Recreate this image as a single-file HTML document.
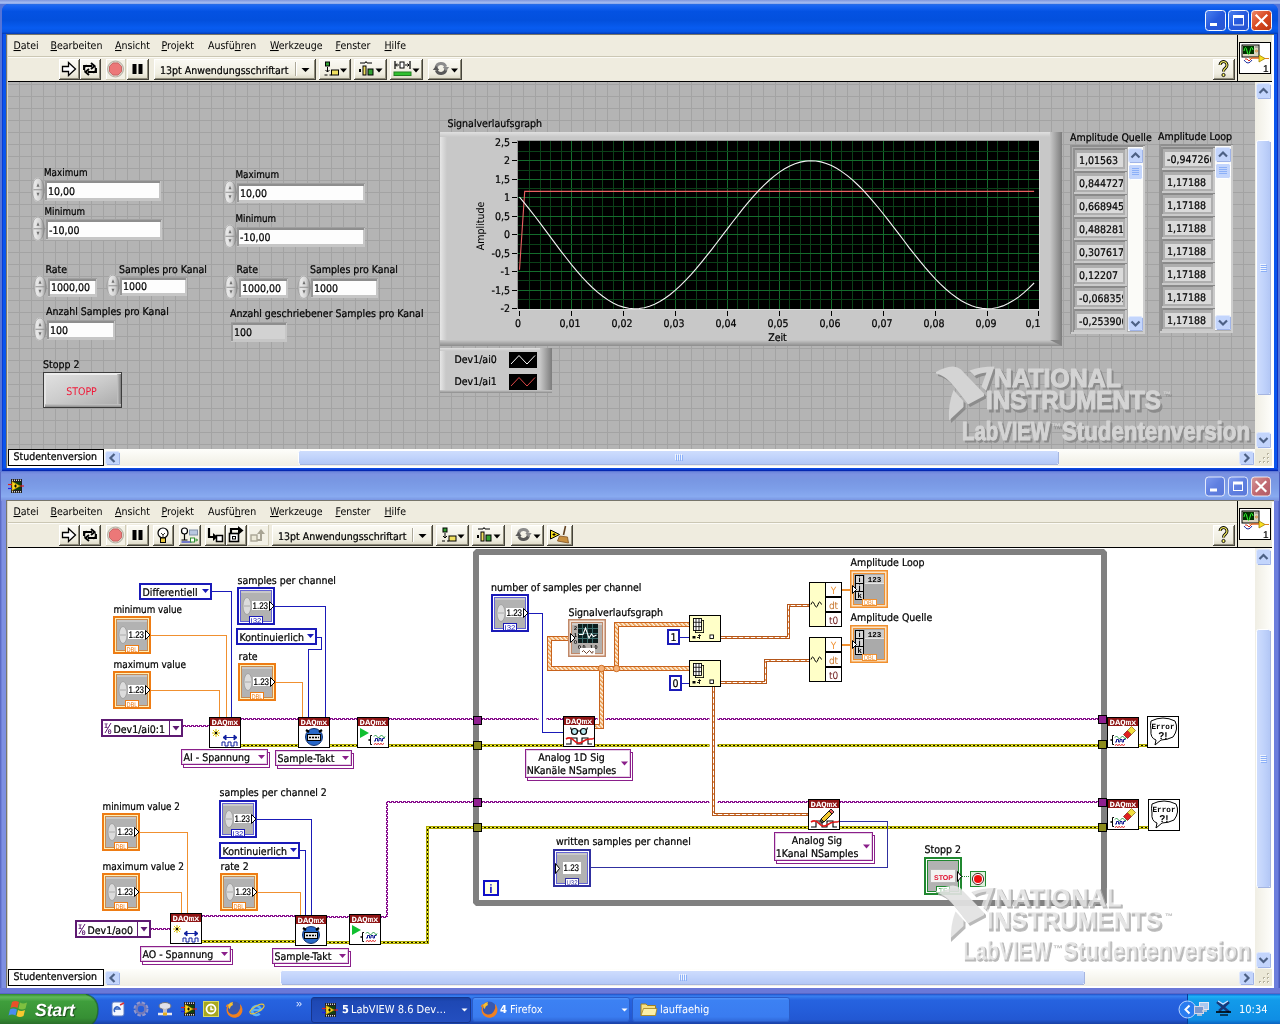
<!DOCTYPE html>
<html lang="de"><head><meta charset="utf-8"><title>LabVIEW 8.6 Development System</title>
<style>
html,body{margin:0;padding:0;width:1280px;height:1024px;overflow:hidden;background:#245edb}
#desktop{position:relative;width:1280px;height:1024px;overflow:hidden}
svg{display:block;will-change:transform}
svg text{white-space:pre}
svg text.k{stroke:#000;stroke-width:0.22px}
</style></head>
<body><div id="desktop">
<section id="frontpanel-window">
<svg style="position:absolute;left:0;top:0px" width="1280" height="471" viewBox="0 0 1280 471" font-family="'DejaVu Sans Condensed','Liberation Sans',sans-serif" font-size="10.5" text-rendering="geometricPrecision"><defs>
<linearGradient id="topband" x1="0" y1="0" x2="0" y2="1"><stop offset="0" stop-color="#7f96de"/><stop offset="0.6" stop-color="#a3baf0"/><stop offset="1" stop-color="#8aa6ea"/></linearGradient>
<linearGradient id="tA" x1="0" y1="0" x2="0" y2="1">
 <stop offset="0" stop-color="#2a6ee6"/><stop offset="0.08" stop-color="#1763f2"/><stop offset="0.25" stop-color="#0452e2"/>
 <stop offset="0.55" stop-color="#0350dd"/><stop offset="0.8" stop-color="#085cf0"/><stop offset="0.93" stop-color="#0654e4"/><stop offset="1" stop-color="#0338b0"/>
</linearGradient>
<linearGradient id="tI" x1="0" y1="0" x2="0" y2="1">
 <stop offset="0" stop-color="#6a82da"/><stop offset="0.12" stop-color="#7b92e2"/><stop offset="0.3" stop-color="#7896e2"/>
 <stop offset="0.6" stop-color="#7d9ee8"/><stop offset="0.88" stop-color="#88aaf0"/><stop offset="1" stop-color="#7a96e2"/>
</linearGradient>
<linearGradient id="btnB" x1="0" y1="0" x2="1" y2="1">
 <stop offset="0" stop-color="#4d82f0"/><stop offset="0.5" stop-color="#2659dd"/><stop offset="1" stop-color="#2a55d0"/>
</linearGradient>
<linearGradient id="btnR" x1="0" y1="0" x2="1" y2="1">
 <stop offset="0" stop-color="#ee8a6c"/><stop offset="0.5" stop-color="#d8481f"/><stop offset="1" stop-color="#b83412"/>
</linearGradient>
<linearGradient id="btnBi" x1="0" y1="0" x2="1" y2="1">
 <stop offset="0" stop-color="#7f9bf0"/><stop offset="0.5" stop-color="#5f7fe0"/><stop offset="1" stop-color="#5a78d8"/>
</linearGradient>
<linearGradient id="btnRi" x1="0" y1="0" x2="1" y2="1">
 <stop offset="0" stop-color="#d59a9a"/><stop offset="0.5" stop-color="#c26a72"/><stop offset="1" stop-color="#b05a66"/>
</linearGradient>
<linearGradient id="hTrack" x1="0" y1="0" x2="0" y2="1">
 <stop offset="0" stop-color="#fefefb"/><stop offset="1" stop-color="#f0eee4"/>
</linearGradient>
<linearGradient id="vTrack" x1="0" y1="0" x2="1" y2="0">
 <stop offset="0" stop-color="#f0eee4"/><stop offset="1" stop-color="#fefefb"/>
</linearGradient>
<linearGradient id="hThumb" x1="0" y1="0" x2="0" y2="1">
 <stop offset="0" stop-color="#cfddfd"/><stop offset="0.5" stop-color="#c1d3fb"/><stop offset="1" stop-color="#b2c6f5"/>
</linearGradient>
<linearGradient id="vThumb" x1="0" y1="0" x2="1" y2="0">
 <stop offset="0" stop-color="#cfddfd"/><stop offset="0.5" stop-color="#c1d3fb"/><stop offset="1" stop-color="#b2c6f5"/>
</linearGradient>
<linearGradient id="tbBtn" x1="0" y1="0" x2="0" y2="1">
 <stop offset="0" stop-color="#fbfaf4"/><stop offset="0.7" stop-color="#efede0"/><stop offset="1" stop-color="#d8d4c0"/>
</linearGradient>
<linearGradient id="taskbar" x1="0" y1="0" x2="0" y2="1">
 <stop offset="0" stop-color="#1f50c8"/><stop offset="0.07" stop-color="#3a80f0"/><stop offset="0.2" stop-color="#2663e0"/>
 <stop offset="0.5" stop-color="#245edb"/><stop offset="0.85" stop-color="#2258d3"/><stop offset="1" stop-color="#1941a5"/>
</linearGradient>
<linearGradient id="tray" x1="0" y1="0" x2="0" y2="1">
 <stop offset="0" stop-color="#0f6ad8"/><stop offset="0.08" stop-color="#1fb0f5"/><stop offset="0.2" stop-color="#129bea"/>
 <stop offset="0.85" stop-color="#0f8ee4"/><stop offset="1" stop-color="#0a62c0"/>
</linearGradient>
<linearGradient id="startg" x1="0" y1="0" x2="0" y2="1">
 <stop offset="0" stop-color="#2f8a2f"/><stop offset="0.1" stop-color="#5fb85a"/><stop offset="0.25" stop-color="#3f9e3c"/>
 <stop offset="0.8" stop-color="#368f34"/><stop offset="1" stop-color="#2a6e2a"/>
</linearGradient>
<linearGradient id="taskAct" x1="0" y1="0" x2="0" y2="1">
 <stop offset="0" stop-color="#183e9e"/><stop offset="0.15" stop-color="#1e48b4"/><stop offset="1" stop-color="#244fc0"/>
</linearGradient>
<linearGradient id="taskBtn" x1="0" y1="0" x2="0" y2="1">
 <stop offset="0" stop-color="#5a97f8"/><stop offset="0.12" stop-color="#3c81f3"/><stop offset="0.8" stop-color="#3a7cf0"/><stop offset="1" stop-color="#2f68d8"/>
</linearGradient>

<filter id="wmblur" x="-5%" y="-20%" width="110%" height="140%"><feGaussianBlur stdDeviation="0.7"/></filter>
<pattern id="grid" x="7" y="0" width="12" height="12" patternUnits="userSpaceOnUse">
 <rect width="12" height="12" fill="#b4b4b4"/><rect width="1" height="12" fill="#a3a3a3"/><rect width="12" height="1" fill="#a3a3a3"/>
</pattern>
<linearGradient id="spin" x1="0" y1="0" x2="1" y2="0">
 <stop offset="0" stop-color="#b0b0b0"/><stop offset="0.25" stop-color="#eaeaea"/><stop offset="0.65" stop-color="#d4d4d4"/><stop offset="1" stop-color="#868686"/>
</linearGradient>
<linearGradient id="stopF" x1="0" y1="0" x2="1" y2="1">
 <stop offset="0" stop-color="#e2e2e2"/><stop offset="0.5" stop-color="#cbcbcb"/><stop offset="1" stop-color="#a8a8a8"/>
</linearGradient>
<linearGradient id="bevR" x1="0" y1="0" x2="1" y2="0">
 <stop offset="0" stop-color="#c8c8c8"/><stop offset="1" stop-color="#7c7c7c"/>
</linearGradient>
<linearGradient id="bevL" x1="0" y1="0" x2="1" y2="0">
 <stop offset="0" stop-color="#e6e6e6"/><stop offset="1" stop-color="#c8c8c8"/>
</linearGradient>
<linearGradient id="bevT" x1="0" y1="0" x2="0" y2="1">
 <stop offset="0" stop-color="#e0e0e0"/><stop offset="1" stop-color="#c8c8c8"/>
</linearGradient>
<linearGradient id="bevB" x1="0" y1="0" x2="0" y2="1">
 <stop offset="0" stop-color="#c8c8c8"/><stop offset="1" stop-color="#8c8c8c"/>
</linearGradient>
</defs>
<rect x="0" y="0" width="1280" height="12" fill="#8aa6ea" />
<rect x="0" y="0" width="1280" height="4" fill="url(#topband)" />
<rect x="0" y="4" width="1280" height="467" fill="#5474d8" />
<path d="M2 471V11a7 7 0 0 1 7-7H1271a7 7 0 0 1 7 7V471z" fill="#0a50e6"/>
<clipPath id="w1clip"><path d="M2 471V11a7 7 0 0 1 7-7H1271a7 7 0 0 1 7 7V471z"/></clipPath>
<g clip-path="url(#w1clip)"><rect x="0" y="4" width="1280" height="30" fill="url(#tA)" /></g>
<rect x="2" y="34" width="1" height="437" fill="#0a3cd4" />
<rect x="3" y="34" width="3" height="434" fill="#0a55ec" />
<rect x="1277" y="34" width="1" height="437" fill="#0a30c0" />
<rect x="1274" y="34" width="3" height="434" fill="#0a55ec" />
<rect x="2" y="468" width="1276" height="1" fill="#0a48e0" />
<rect x="2" y="469" width="1276" height="1" fill="#0a3cd2" />
<rect x="2" y="470" width="1276" height="1" fill="#0628b0" />
<rect x="6" y="34" width="1268" height="434" fill="#ece9d8" />
<rect x="6" y="34" width="1" height="434" fill="#77756a" />
<rect x="6" y="34" width="1268" height="1" fill="#77756a" />
<rect x="7" y="35" width="1" height="431" fill="#d8d4c8" />
<rect x="7" y="466" width="1266" height="2" fill="#fff" />
<rect x="1272" y="35" width="2" height="433" fill="#fff" />
<rect x="1205.5" y="10.5" width="20" height="20" rx="3" fill="url(#btnB)" stroke="#fff" stroke-width="1" stroke-opacity="0.95"/>
<rect x="1228.5" y="10.5" width="20" height="20" rx="3" fill="url(#btnB)" stroke="#fff" stroke-width="1" stroke-opacity="0.95"/>
<rect x="1251.5" y="10.5" width="20" height="20" rx="3" fill="url(#btnR)" stroke="#fff" stroke-width="1" stroke-opacity="0.95"/>
<rect x="1210" y="23" width="7" height="3" fill="#fff" />
<rect x="1233.5" y="16" width="10" height="9" fill="none" stroke="#fff" stroke-width="1"/>
<rect x="1233" y="15" width="11" height="3" fill="#fff" />
<path d="M1256.5 15.5L1266.5 25.5M1266.5 15.5L1256.5 25.5" stroke="#fff" stroke-width="2.2" stroke-linecap="square"/>
<rect x="8" y="35" width="1264" height="21" fill="#efecdf" />
<text x="13.5" y="49" font-size="10.5" fill="#000"><tspan text-decoration="underline">D</tspan>atei</text>
<text x="50.5" y="49" font-size="10.5" fill="#000"><tspan text-decoration="underline">B</tspan>earbeiten</text>
<text x="115" y="49" font-size="10.5" fill="#000"><tspan text-decoration="underline">A</tspan>nsicht</text>
<text x="161.5" y="49" font-size="10.5" fill="#000"><tspan text-decoration="underline">P</tspan>rojekt</text>
<text x="208" y="49" font-size="10.5" fill="#000">Ausfü<tspan text-decoration="underline">h</tspan>ren</text>
<text x="270" y="49" font-size="10.5" fill="#000"><tspan text-decoration="underline">W</tspan>erkzeuge</text>
<text x="335.5" y="49" font-size="10.5" fill="#000"><tspan text-decoration="underline">F</tspan>enster</text>
<text x="384.5" y="49" font-size="10.5" fill="#000"><tspan text-decoration="underline">H</tspan>ilfe</text>
<rect x="8" y="56" width="1264" height="1" fill="#cbc7b4" />
<rect x="8" y="57" width="1264" height="1" fill="#fbfaf5" />
<rect x="8" y="58" width="1264" height="23" fill="#efecdf" />
<rect x="59" y="59" width="21" height="21" fill="url(#tbBtn)" />
<rect x="59" y="59" width="21" height="1" fill="#fff" />
<rect x="59" y="59" width="1" height="21" fill="#fff" />
<rect x="60" y="78" width="20" height="1" fill="#8e8b7a" />
<rect x="78" y="60" width="1" height="20" fill="#8e8b7a" />
<rect x="59" y="79" width="21" height="1" fill="#45433a" />
<rect x="79" y="59" width="1" height="21" fill="#45433a" />
<path d="M62.5 66.5h6v-4l7 6.5l-7 6.5v-4h-6z" fill="#fff" stroke="#000" stroke-width="1.3" stroke-linejoin="miter"/>
<rect x="80" y="59" width="21" height="21" fill="url(#tbBtn)" />
<rect x="80" y="59" width="21" height="1" fill="#fff" />
<rect x="80" y="59" width="1" height="21" fill="#fff" />
<rect x="81" y="78" width="20" height="1" fill="#8e8b7a" />
<rect x="99" y="60" width="1" height="20" fill="#8e8b7a" />
<rect x="80" y="79" width="21" height="1" fill="#45433a" />
<rect x="100" y="59" width="1" height="21" fill="#45433a" />
<g fill="none" stroke="#000" stroke-width="1.9"><path d="M84.0 70.0v-4h8"/><path d="M96.0 68.0v4h-8"/><path d="M91.0 63.0l3.5 3l-3.5 3" /><path d="M89.0 75.0l-3.5-3l3.5-3"/><path d="M86.5 73.0a5 5 0 0 1 0-8M93.5 65.0a5 5 0 0 1 0 8" stroke-width="1.2"/></g>
<rect x="106" y="59" width="20" height="21" fill="#f3f1e6" />
<rect x="106" y="59" width="20" height="1" fill="#fff" />
<rect x="106" y="59" width="1" height="21" fill="#fff" />
<rect x="106" y="79" width="20" height="1" fill="#d0ccb8" />
<rect x="125" y="59" width="1" height="21" fill="#d0ccb8" />
<circle cx="115.5" cy="69.0" r="8" fill="#dcd8cc" stroke="#b4b0a4" stroke-width="1"/><polygon points="112.9,63.0 118.1,63.0 121.5,66.4 121.5,71.6 118.1,75.0 112.9,75.0 109.5,71.6 109.5,66.4" fill="#ec7878" stroke="#c86464" stroke-width="1"/>
<rect x="127" y="59" width="22" height="21" fill="url(#tbBtn)" />
<rect x="127" y="59" width="22" height="1" fill="#fff" />
<rect x="127" y="59" width="1" height="21" fill="#fff" />
<rect x="128" y="78" width="21" height="1" fill="#8e8b7a" />
<rect x="147" y="60" width="1" height="20" fill="#8e8b7a" />
<rect x="127" y="79" width="22" height="1" fill="#45433a" />
<rect x="148" y="59" width="1" height="21" fill="#45433a" />
<rect x="132.5" y="64.0" width="4" height="10" fill="#000" /><rect x="138.5" y="64.0" width="4" height="10" fill="#000" />
<rect x="154" y="59" width="162" height="21" fill="url(#tbBtn)" />
<rect x="154" y="59" width="162" height="1" fill="#fff" />
<rect x="154" y="59" width="1" height="21" fill="#fff" />
<rect x="155" y="78" width="161" height="1" fill="#8e8b7a" />
<rect x="314" y="60" width="1" height="20" fill="#8e8b7a" />
<rect x="154" y="79" width="162" height="1" fill="#45433a" />
<rect x="315" y="59" width="1" height="21" fill="#45433a" /><text x="160" y="73.5" font-size="10.5" fill="#000" class="k" >13pt Anwendungsschriftart</text><rect x="295" y="62" width="1" height="14" fill="#aca899" /><rect x="296" y="62" width="1" height="14" fill="#fff" /><path d="M301.5 68.0h8l-4.0 4z" fill="#000"/>
<rect x="319" y="59" width="32" height="21" fill="url(#tbBtn)" />
<rect x="319" y="59" width="32" height="1" fill="#fff" />
<rect x="319" y="59" width="1" height="21" fill="#fff" />
<rect x="320" y="78" width="31" height="1" fill="#8e8b7a" />
<rect x="349" y="60" width="1" height="20" fill="#8e8b7a" />
<rect x="319" y="79" width="32" height="1" fill="#45433a" />
<rect x="350" y="59" width="1" height="21" fill="#45433a" />
<rect x="325.5" y="62.0" width="4" height="4" fill="#30a030" stroke="#000" stroke-width="1" /><path d="M327.5 67.0v5M325.5 70.0l2 2l2-2M324.5 75.0h3M329.5 75.0h2" stroke="#000" stroke-width="1" fill="none"/><rect x="331.5" y="70.0" width="7" height="5" fill="#f0e060" stroke="#000" stroke-width="1" /><path d="M340.0 68.5h7l-3.5 4z" fill="#000"/>
<rect x="354" y="59" width="33" height="21" fill="url(#tbBtn)" />
<rect x="354" y="59" width="33" height="1" fill="#fff" />
<rect x="354" y="59" width="1" height="21" fill="#fff" />
<rect x="355" y="78" width="32" height="1" fill="#8e8b7a" />
<rect x="385" y="60" width="1" height="20" fill="#8e8b7a" />
<rect x="354" y="79" width="33" height="1" fill="#45433a" />
<rect x="386" y="59" width="1" height="21" fill="#45433a" />
<path d="M360.0 63.0h5l1-1.5l1 1.5h5" stroke="#000" stroke-width="1" fill="none"/><rect x="359.0" y="69.0" width="2" height="3" fill="#000" /><rect x="363.0" y="66.0" width="3" height="9" fill="#f0e060" stroke="#000" stroke-width="1" /><rect x="368.0" y="69.0" width="5" height="6" fill="#30a030" stroke="#000" stroke-width="1" /><path d="M375.5 68.5h7l-3.5 4z" fill="#000"/>
<rect x="390" y="59" width="33" height="21" fill="url(#tbBtn)" />
<rect x="390" y="59" width="33" height="1" fill="#fff" />
<rect x="390" y="59" width="1" height="21" fill="#fff" />
<rect x="391" y="78" width="32" height="1" fill="#8e8b7a" />
<rect x="421" y="60" width="1" height="20" fill="#8e8b7a" />
<rect x="390" y="79" width="33" height="1" fill="#45433a" />
<rect x="422" y="59" width="1" height="21" fill="#45433a" />
<path d="M395.0 61.0v8M410.0 61.0v8" stroke="#000" stroke-width="1.2"/><rect x="400.0" y="62.0" width="4" height="6" fill="#fff" stroke="#000" stroke-width="1" /><path d="M396.0 65.0h3M405.0 65.0h4M397.0 63.5l-1.5 1.5l1.5 1.5M407.5 63.5l1.5 1.5l-1.5 1.5" stroke="#000" stroke-width="1" fill="none"/><rect x="394.0" y="72.0" width="17" height="3.5" fill="#30c030" stroke="#208020" stroke-width="1" /><path d="M412.5 68.5h7l-3.5 4z" fill="#000"/>
<rect x="428" y="59" width="34" height="21" fill="url(#tbBtn)" />
<rect x="428" y="59" width="34" height="1" fill="#fff" />
<rect x="428" y="59" width="1" height="21" fill="#fff" />
<rect x="429" y="78" width="33" height="1" fill="#8e8b7a" />
<rect x="460" y="60" width="1" height="20" fill="#8e8b7a" />
<rect x="428" y="79" width="34" height="1" fill="#45433a" />
<rect x="461" y="59" width="1" height="21" fill="#45433a" />
<path d="M436.08 67.63A5 5 0 0 1 445.7 66.79" fill="none" stroke="#8c8c8c" stroke-width="3"/><path d="M445.92 69.37A5 5 0 0 1 436.3 70.21" fill="none" stroke="#585858" stroke-width="3"/><path d="M442.8 67.0h6.4l-3.2 4.2z" fill="#8c8c8c"/><path d="M432.8 70.0h6.4l-3.2-4.2z" fill="#585858"/><path d="M451.0 68.5h7l-3.5 4z" fill="#000"/>
<rect x="1213" y="59" width="22" height="21" fill="url(#tbBtn)" />
<rect x="1213" y="59" width="22" height="1" fill="#fff" />
<rect x="1213" y="59" width="1" height="21" fill="#fff" />
<rect x="1214" y="78" width="21" height="1" fill="#8e8b7a" />
<rect x="1233" y="60" width="1" height="20" fill="#8e8b7a" />
<rect x="1213" y="79" width="22" height="1" fill="#45433a" />
<rect x="1234" y="59" width="1" height="21" fill="#45433a" />
<path d="M1220.0 65.0a3.5 3.5 0 1 1 5.5 3q-2 1.5-2 3.5" fill="none" stroke="#000" stroke-width="3"/><path d="M1220.0 65.0a3.5 3.5 0 1 1 5.5 3q-2 1.5-2 3.5" fill="none" stroke="#f8f060" stroke-width="1.2"/><circle cx="1223.5" cy="75.0" r="1.6" fill="#f8f060" stroke="#000" stroke-width="0.9"/>
<rect x="8" y="81" width="1264" height="1" fill="#000" />
<rect x="1238" y="35" width="34" height="46" fill="#ece9d8" />
<rect x="1237" y="35" width="1" height="46" fill="#000" />
<rect x="1239.5" y="42.5" width="31" height="31" fill="#fff" stroke="#000" stroke-width="1" /><rect x="1242" y="45" width="17" height="12" fill="#d8d4c0" stroke="#000" stroke-width="1" /><rect x="1243" y="46" width="11" height="8" fill="#003000" /><path d="M1244 51q1.5-7 3 0t3 0t3-1" fill="none" stroke="#30ff30" stroke-width="1"/><circle cx="1256.5" cy="51" r="1" fill="none" stroke="#e08020" stroke-width="0.8"/><path d="M1255 47h3" stroke="#808080" stroke-width="1"/><path d="M1244 60q4 6 8 0" fill="none" stroke="#2030a0" stroke-width="1"/><path d="M1245 59h2l2 2l3-3h7" fill="none" stroke="#e03020" stroke-width="1"/><path d="M1249 58h10" stroke="#e08020" stroke-width="1"/><path d="M1259 55l6 3.5l-6 3.5z" fill="#f8e020" stroke="#a08000" stroke-width="0.8"/><path d="M1265 58.5h4" stroke="#e08020" stroke-width="1"/><text x="1263" y="72" font-size="10" fill="#000" class="k" font-family="'Liberation Sans',sans-serif" >1</text>
<rect x="1255" y="82" width="17" height="367" fill="url(#vTrack)" />
<rect x="1256.5" y="83.5" width="14" height="15" rx="2" fill="#c3d5fc" stroke="#dfe8fd" stroke-width="1"/><path d="M1270.5 85V98.5H1258" stroke="#a0b4e8" stroke-width="1" fill="none"/><path d="M1259.5 93.0l4-4l4 4" fill="none" stroke="#4d6185" stroke-width="2.2"/>
<rect x="1256.5" y="432.5" width="14" height="15" rx="2" fill="#c3d5fc" stroke="#dfe8fd" stroke-width="1"/><path d="M1270.5 434V447.5H1258" stroke="#a0b4e8" stroke-width="1" fill="none"/><path d="M1259.5 438.0l4 4l4-4" fill="none" stroke="#4d6185" stroke-width="2.2"/>
<rect x="1256.5" y="140.5" width="14" height="254" rx="2" fill="url(#vThumb)" stroke="#fff" stroke-width="1"/>
<path d="M1270.5 142V394.5H1258" stroke="#8ea2d8" stroke-width="1" fill="none" opacity="0.8"/>
<rect x="1260" y="264" width="6" height="1" fill="#eef4fe" />
<rect x="1261" y="265" width="6" height="1" fill="#8cb0f8" />
<rect x="1260" y="266" width="6" height="1" fill="#eef4fe" />
<rect x="1261" y="267" width="6" height="1" fill="#8cb0f8" />
<rect x="1260" y="268" width="6" height="1" fill="#eef4fe" />
<rect x="1261" y="269" width="6" height="1" fill="#8cb0f8" />
<rect x="1260" y="270" width="6" height="1" fill="#eef4fe" />
<rect x="1261" y="271" width="6" height="1" fill="#8cb0f8" />
<rect x="8" y="449" width="1247" height="17" fill="url(#hTrack)" />
<rect x="8.5" y="449.5" width="95" height="16" fill="#fff" stroke="#000" stroke-width="1" />
<text x="13.5" y="460" font-size="10.5" fill="#000" class="k" >Studentenversion</text>
<rect x="105.5" y="451.5" width="14" height="13" rx="2" fill="#c3d5fc" stroke="#dfe8fd" stroke-width="1"/><path d="M119.5 453V464.5H107" stroke="#a0b4e8" stroke-width="1" fill="none"/><path d="M114.5 454.0l-4 4l4 4" fill="none" stroke="#4d6185" stroke-width="2.2"/>
<rect x="1239.5" y="451.5" width="14" height="13" rx="2" fill="#c3d5fc" stroke="#dfe8fd" stroke-width="1"/><path d="M1253.5 453V464.5H1241" stroke="#a0b4e8" stroke-width="1" fill="none"/><path d="M1244.5 454.0l4 4l-4 4" fill="none" stroke="#4d6185" stroke-width="2.2"/>
<rect x="298.5" y="450.5" width="760" height="14" rx="2" fill="url(#hThumb)" stroke="#fff" stroke-width="1"/>
<path d="M1058.5 452v12M300 464.5h758" stroke="#8ea2d8" stroke-width="1" fill="none" opacity="0.8"/>
<rect x="675" y="454" width="1" height="6" fill="#eef4fe" />
<rect x="676" y="455" width="1" height="6" fill="#8cb0f8" />
<rect x="677" y="454" width="1" height="6" fill="#eef4fe" />
<rect x="678" y="455" width="1" height="6" fill="#8cb0f8" />
<rect x="679" y="454" width="1" height="6" fill="#eef4fe" />
<rect x="680" y="455" width="1" height="6" fill="#8cb0f8" />
<rect x="681" y="454" width="1" height="6" fill="#eef4fe" />
<rect x="682" y="455" width="1" height="6" fill="#8cb0f8" />
<rect x="1255" y="449" width="17" height="17" fill="#ece9d8" />
<rect x="1267" y="461" width="2" height="2" fill="#b8b4a0" />
<rect x="1268" y="462" width="1" height="1" fill="#fff" />
<rect x="1263" y="461" width="2" height="2" fill="#b8b4a0" />
<rect x="1264" y="462" width="1" height="1" fill="#fff" />
<rect x="1267" y="457" width="2" height="2" fill="#b8b4a0" />
<rect x="1268" y="458" width="1" height="1" fill="#fff" />
<rect x="1259" y="461" width="2" height="2" fill="#b8b4a0" />
<rect x="1260" y="462" width="1" height="1" fill="#fff" />
<rect x="1263" y="457" width="2" height="2" fill="#b8b4a0" />
<rect x="1264" y="458" width="1" height="1" fill="#fff" />
<rect x="1267" y="453" width="2" height="2" fill="#b8b4a0" />
<rect x="1268" y="454" width="1" height="1" fill="#fff" /><rect x="8" y="82" width="1247" height="367" fill="url(#grid)" />
<text x="44" y="176" font-size="10.5" fill="#000" class="k" textLength="43.5" lengthAdjust="spacingAndGlyphs" >Maximum</text>
<ellipse cx="38.0" cy="189.75" rx="6.5" ry="12.25" fill="url(#spin)"/><ellipse cx="38.0" cy="189.75" rx="6.0" ry="11.75" fill="none" stroke="#808080" stroke-width="0.7" opacity="0.7"/><path d="M33.5 189.75h9.0" stroke="#909090" stroke-width="1"/><path d="M36.5 186.75l1.5-3.5l1.5 3.5z M36.5 192.75l1.5 3.5l1.5-3.5z" fill="#707070"/>
<rect x="45" y="180" width="116" height="21" fill="#c6c6c6" />
<rect x="45" y="180" width="115" height="3" fill="#8e8e8e" />
<rect x="45" y="180" width="2" height="20" fill="#969696" />
<rect x="45" y="180" width="116" height="1" fill="#a0a0a0" />
<rect x="47" y="183" width="112" height="15" fill="#fdfdfd" />
<text x="48" y="194.5" font-size="10.5" fill="#000" class="k" >10,00</text>
<text x="44.5" y="215" font-size="10.5" fill="#000" class="k" textLength="40.5" lengthAdjust="spacingAndGlyphs" >Minimum</text>
<ellipse cx="38.0" cy="228.75" rx="6.5" ry="12.25" fill="url(#spin)"/><ellipse cx="38.0" cy="228.75" rx="6.0" ry="11.75" fill="none" stroke="#808080" stroke-width="0.7" opacity="0.7"/><path d="M33.5 228.75h9.0" stroke="#909090" stroke-width="1"/><path d="M36.5 225.75l1.5-3.5l1.5 3.5z M36.5 231.75l1.5 3.5l1.5-3.5z" fill="#707070"/>
<rect x="46" y="219" width="116" height="21" fill="#c6c6c6" />
<rect x="46" y="219" width="115" height="3" fill="#8e8e8e" />
<rect x="46" y="219" width="2" height="20" fill="#969696" />
<rect x="46" y="219" width="116" height="1" fill="#a0a0a0" />
<rect x="48" y="222" width="112" height="15" fill="#fdfdfd" />
<text x="49" y="233.5" font-size="10.5" fill="#000" class="k" >-10,00</text>
<text x="45.5" y="273" font-size="10.5" fill="#000" class="k" >Rate</text>
<ellipse cx="40.0" cy="286.75" rx="6.5" ry="11.25" fill="url(#spin)"/><ellipse cx="40.0" cy="286.75" rx="6.0" ry="10.75" fill="none" stroke="#808080" stroke-width="0.7" opacity="0.7"/><path d="M35.5 286.75h9.0" stroke="#909090" stroke-width="1"/><path d="M38.5 283.75l1.5-3.5l1.5 3.5z M38.5 289.75l1.5 3.5l1.5-3.5z" fill="#707070"/>
<rect x="48" y="278" width="49" height="19" fill="#c6c6c6" />
<rect x="48" y="278" width="48" height="3" fill="#8e8e8e" />
<rect x="48" y="278" width="2" height="18" fill="#969696" />
<rect x="48" y="278" width="49" height="1" fill="#a0a0a0" />
<rect x="50" y="281" width="45" height="13" fill="#fdfdfd" />
<text x="51" y="290.5" font-size="10.5" fill="#000" class="k" >1000,00</text>
<text x="119" y="272.5" font-size="10.5" fill="#000" class="k" >Samples pro Kanal</text>
<ellipse cx="113.0" cy="285.75" rx="6.5" ry="11.25" fill="url(#spin)"/><ellipse cx="113.0" cy="285.75" rx="6.0" ry="10.75" fill="none" stroke="#808080" stroke-width="0.7" opacity="0.7"/><path d="M108.5 285.75h9.0" stroke="#909090" stroke-width="1"/><path d="M111.5 282.75l1.5-3.5l1.5 3.5z M111.5 288.75l1.5 3.5l1.5-3.5z" fill="#707070"/>
<rect x="120" y="277" width="67" height="19" fill="#c6c6c6" />
<rect x="120" y="277" width="66" height="3" fill="#8e8e8e" />
<rect x="120" y="277" width="2" height="18" fill="#969696" />
<rect x="120" y="277" width="67" height="1" fill="#a0a0a0" />
<rect x="122" y="280" width="63" height="13" fill="#fdfdfd" />
<text x="123" y="289.5" font-size="10.5" fill="#000" class="k" >1000</text>
<text x="46" y="315" font-size="10.5" fill="#000" class="k" >Anzahl Samples pro Kanal</text>
<ellipse cx="40.0" cy="329.25" rx="6.5" ry="11.75" fill="url(#spin)"/><ellipse cx="40.0" cy="329.25" rx="6.0" ry="11.25" fill="none" stroke="#808080" stroke-width="0.7" opacity="0.7"/><path d="M35.5 329.25h9.0" stroke="#909090" stroke-width="1"/><path d="M38.5 326.25l1.5-3.5l1.5 3.5z M38.5 332.25l1.5 3.5l1.5-3.5z" fill="#707070"/>
<rect x="47" y="320" width="68" height="20" fill="#c6c6c6" />
<rect x="47" y="320" width="67" height="3" fill="#8e8e8e" />
<rect x="47" y="320" width="2" height="19" fill="#969696" />
<rect x="47" y="320" width="68" height="1" fill="#a0a0a0" />
<rect x="49" y="323" width="64" height="14" fill="#fdfdfd" />
<text x="50" y="333.5" font-size="10.5" fill="#000" class="k" >100</text>
<text x="43" y="368" font-size="10.5" fill="#000" class="k" >Stopp 2</text>
<rect x="43.5" y="372.5" width="78" height="35" fill="url(#stopF)" stroke="#3c3c3c" stroke-width="1" />
<rect x="44" y="373" width="77" height="2" fill="#ececec" />
<rect x="44" y="373" width="2" height="34" fill="#e4e4e4" />
<rect x="117" y="374" width="4" height="33" fill="url(#bevR)" />
<rect x="45" y="404" width="76" height="3" fill="url(#bevB)" />
<text x="81.5" y="395" font-size="10.5" fill="#f01838" text-anchor="middle" >STOPP</text>
<text x="235.5" y="178" font-size="10.5" fill="#000" class="k" textLength="43.5" lengthAdjust="spacingAndGlyphs" >Maximum</text>
<ellipse cx="230.0" cy="192.25" rx="6.5" ry="11.75" fill="url(#spin)"/><ellipse cx="230.0" cy="192.25" rx="6.0" ry="11.25" fill="none" stroke="#808080" stroke-width="0.7" opacity="0.7"/><path d="M225.5 192.25h9.0" stroke="#909090" stroke-width="1"/><path d="M228.5 189.25l1.5-3.5l1.5 3.5z M228.5 195.25l1.5 3.5l1.5-3.5z" fill="#707070"/>
<rect x="237" y="183" width="128" height="20" fill="#c6c6c6" />
<rect x="237" y="183" width="127" height="3" fill="#8e8e8e" />
<rect x="237" y="183" width="2" height="19" fill="#969696" />
<rect x="237" y="183" width="128" height="1" fill="#a0a0a0" />
<rect x="239" y="186" width="124" height="14" fill="#fdfdfd" />
<text x="240" y="196.5" font-size="10.5" fill="#000" class="k" >10,00</text>
<text x="235.5" y="222" font-size="10.5" fill="#000" class="k" textLength="40.5" lengthAdjust="spacingAndGlyphs" >Minimum</text>
<ellipse cx="230.0" cy="236.25" rx="6.5" ry="11.75" fill="url(#spin)"/><ellipse cx="230.0" cy="236.25" rx="6.0" ry="11.25" fill="none" stroke="#808080" stroke-width="0.7" opacity="0.7"/><path d="M225.5 236.25h9.0" stroke="#909090" stroke-width="1"/><path d="M228.5 233.25l1.5-3.5l1.5 3.5z M228.5 239.25l1.5 3.5l1.5-3.5z" fill="#707070"/>
<rect x="237" y="227" width="128" height="20" fill="#c6c6c6" />
<rect x="237" y="227" width="127" height="3" fill="#8e8e8e" />
<rect x="237" y="227" width="2" height="19" fill="#969696" />
<rect x="237" y="227" width="128" height="1" fill="#a0a0a0" />
<rect x="239" y="230" width="124" height="14" fill="#fdfdfd" />
<text x="240" y="240.5" font-size="10.5" fill="#000" class="k" >-10,00</text>
<text x="236.5" y="273" font-size="10.5" fill="#000" class="k" >Rate</text>
<ellipse cx="231.0" cy="287.25" rx="6.5" ry="11.75" fill="url(#spin)"/><ellipse cx="231.0" cy="287.25" rx="6.0" ry="11.25" fill="none" stroke="#808080" stroke-width="0.7" opacity="0.7"/><path d="M226.5 287.25h9.0" stroke="#909090" stroke-width="1"/><path d="M229.5 284.25l1.5-3.5l1.5 3.5z M229.5 290.25l1.5 3.5l1.5-3.5z" fill="#707070"/>
<rect x="239" y="278" width="49" height="20" fill="#c6c6c6" />
<rect x="239" y="278" width="48" height="3" fill="#8e8e8e" />
<rect x="239" y="278" width="2" height="19" fill="#969696" />
<rect x="239" y="278" width="49" height="1" fill="#a0a0a0" />
<rect x="241" y="281" width="45" height="14" fill="#fdfdfd" />
<text x="242" y="291.5" font-size="10.5" fill="#000" class="k" >1000,00</text>
<text x="310" y="273" font-size="10.5" fill="#000" class="k" >Samples pro Kanal</text>
<ellipse cx="304.0" cy="287.25" rx="6.5" ry="11.75" fill="url(#spin)"/><ellipse cx="304.0" cy="287.25" rx="6.0" ry="11.25" fill="none" stroke="#808080" stroke-width="0.7" opacity="0.7"/><path d="M299.5 287.25h9.0" stroke="#909090" stroke-width="1"/><path d="M302.5 284.25l1.5-3.5l1.5 3.5z M302.5 290.25l1.5 3.5l1.5-3.5z" fill="#707070"/>
<rect x="311" y="278" width="67" height="20" fill="#c6c6c6" />
<rect x="311" y="278" width="66" height="3" fill="#8e8e8e" />
<rect x="311" y="278" width="2" height="19" fill="#969696" />
<rect x="311" y="278" width="67" height="1" fill="#a0a0a0" />
<rect x="313" y="281" width="63" height="14" fill="#fdfdfd" />
<text x="314" y="291.5" font-size="10.5" fill="#000" class="k" >1000</text>
<text x="230" y="317" font-size="10.5" fill="#000" class="k" >Anzahl geschriebener Samples pro Kanal</text>
<rect x="231" y="322" width="56" height="20" fill="#c6c6c6" />
<rect x="231" y="322" width="55" height="3" fill="#8e8e8e" />
<rect x="231" y="322" width="2" height="19" fill="#969696" />
<rect x="231" y="322" width="56" height="1" fill="#a0a0a0" />
<rect x="233" y="325" width="52" height="14" fill="#d2d2d2" />
<text x="234" y="335.5" font-size="10.5" fill="#000" class="k" >100</text>
<rect x="440" y="132" width="622" height="214" fill="#c8c8c8" />
<rect x="440" y="132" width="7" height="214" fill="url(#bevL)" />
<rect x="440" y="132" width="622" height="5" fill="url(#bevT)" />
<rect x="1050" y="132" width="12" height="214" fill="url(#bevR)" />
<rect x="440" y="340" width="622" height="6" fill="url(#bevB)" />
<path d="M1050 340h12v6z" fill="#848484"/>
<rect x="517" y="140" width="523" height="170" fill="#dadada" />
<rect x="517" y="140" width="522" height="169" fill="#9a9a9a" />
<rect x="518" y="141" width="521" height="168" fill="#000" />
<rect x="529" y="141" width="1" height="168" fill="#0b4018" />
<rect x="540" y="141" width="1" height="168" fill="#0b4018" />
<rect x="550" y="141" width="1" height="168" fill="#0b4018" />
<rect x="561" y="141" width="1" height="168" fill="#0b4018" />
<rect x="571" y="141" width="1" height="168" fill="#146c2c" />
<rect x="581" y="141" width="1" height="168" fill="#0b4018" />
<rect x="592" y="141" width="1" height="168" fill="#0b4018" />
<rect x="602" y="141" width="1" height="168" fill="#0b4018" />
<rect x="613" y="141" width="1" height="168" fill="#0b4018" />
<rect x="623" y="141" width="1" height="168" fill="#146c2c" />
<rect x="633" y="141" width="1" height="168" fill="#0b4018" />
<rect x="644" y="141" width="1" height="168" fill="#0b4018" />
<rect x="654" y="141" width="1" height="168" fill="#0b4018" />
<rect x="665" y="141" width="1" height="168" fill="#0b4018" />
<rect x="675" y="141" width="1" height="168" fill="#146c2c" />
<rect x="685" y="141" width="1" height="168" fill="#0b4018" />
<rect x="696" y="141" width="1" height="168" fill="#0b4018" />
<rect x="706" y="141" width="1" height="168" fill="#0b4018" />
<rect x="717" y="141" width="1" height="168" fill="#0b4018" />
<rect x="727" y="141" width="1" height="168" fill="#146c2c" />
<rect x="737" y="141" width="1" height="168" fill="#0b4018" />
<rect x="748" y="141" width="1" height="168" fill="#0b4018" />
<rect x="758" y="141" width="1" height="168" fill="#0b4018" />
<rect x="769" y="141" width="1" height="168" fill="#0b4018" />
<rect x="779" y="141" width="1" height="168" fill="#146c2c" />
<rect x="789" y="141" width="1" height="168" fill="#0b4018" />
<rect x="800" y="141" width="1" height="168" fill="#0b4018" />
<rect x="810" y="141" width="1" height="168" fill="#0b4018" />
<rect x="820" y="141" width="1" height="168" fill="#0b4018" />
<rect x="831" y="141" width="1" height="168" fill="#146c2c" />
<rect x="841" y="141" width="1" height="168" fill="#0b4018" />
<rect x="852" y="141" width="1" height="168" fill="#0b4018" />
<rect x="862" y="141" width="1" height="168" fill="#0b4018" />
<rect x="872" y="141" width="1" height="168" fill="#0b4018" />
<rect x="883" y="141" width="1" height="168" fill="#146c2c" />
<rect x="893" y="141" width="1" height="168" fill="#0b4018" />
<rect x="904" y="141" width="1" height="168" fill="#0b4018" />
<rect x="914" y="141" width="1" height="168" fill="#0b4018" />
<rect x="924" y="141" width="1" height="168" fill="#0b4018" />
<rect x="935" y="141" width="1" height="168" fill="#146c2c" />
<rect x="945" y="141" width="1" height="168" fill="#0b4018" />
<rect x="956" y="141" width="1" height="168" fill="#0b4018" />
<rect x="966" y="141" width="1" height="168" fill="#0b4018" />
<rect x="976" y="141" width="1" height="168" fill="#0b4018" />
<rect x="987" y="141" width="1" height="168" fill="#146c2c" />
<rect x="997" y="141" width="1" height="168" fill="#0b4018" />
<rect x="1008" y="141" width="1" height="168" fill="#0b4018" />
<rect x="1018" y="141" width="1" height="168" fill="#0b4018" />
<rect x="1028" y="141" width="1" height="168" fill="#0b4018" />
<rect x="518" y="151" width="521" height="1" fill="#0b4018" />
<rect x="518" y="160" width="521" height="1" fill="#146c2c" />
<rect x="518" y="170" width="521" height="1" fill="#0b4018" />
<rect x="518" y="179" width="521" height="1" fill="#146c2c" />
<rect x="518" y="188" width="521" height="1" fill="#0b4018" />
<rect x="518" y="197" width="521" height="1" fill="#146c2c" />
<rect x="518" y="206" width="521" height="1" fill="#0b4018" />
<rect x="518" y="216" width="521" height="1" fill="#146c2c" />
<rect x="518" y="225" width="521" height="1" fill="#0b4018" />
<rect x="518" y="234" width="521" height="1" fill="#146c2c" />
<rect x="518" y="244" width="521" height="1" fill="#0b4018" />
<rect x="518" y="253" width="521" height="1" fill="#146c2c" />
<rect x="518" y="262" width="521" height="1" fill="#0b4018" />
<rect x="518" y="271" width="521" height="1" fill="#146c2c" />
<rect x="518" y="280" width="521" height="1" fill="#0b4018" />
<rect x="518" y="290" width="521" height="1" fill="#146c2c" />
<rect x="518" y="299" width="521" height="1" fill="#0b4018" />
<rect x="519" y="311" width="1" height="5" fill="#000" />
<text x="518" y="327" font-size="10.5" fill="#000" class="k" text-anchor="middle" >0</text>
<rect x="571" y="311" width="1" height="5" fill="#000" />
<text x="570" y="327" font-size="10.5" fill="#000" class="k" text-anchor="middle" >0,01</text>
<rect x="623" y="311" width="1" height="5" fill="#000" />
<text x="622" y="327" font-size="10.5" fill="#000" class="k" text-anchor="middle" >0,02</text>
<rect x="675" y="311" width="1" height="5" fill="#000" />
<text x="674" y="327" font-size="10.5" fill="#000" class="k" text-anchor="middle" >0,03</text>
<rect x="727" y="311" width="1" height="5" fill="#000" />
<text x="726" y="327" font-size="10.5" fill="#000" class="k" text-anchor="middle" >0,04</text>
<rect x="779" y="311" width="1" height="5" fill="#000" />
<text x="778" y="327" font-size="10.5" fill="#000" class="k" text-anchor="middle" >0,05</text>
<rect x="831" y="311" width="1" height="5" fill="#000" />
<text x="830" y="327" font-size="10.5" fill="#000" class="k" text-anchor="middle" >0,06</text>
<rect x="883" y="311" width="1" height="5" fill="#000" />
<text x="882" y="327" font-size="10.5" fill="#000" class="k" text-anchor="middle" >0,07</text>
<rect x="935" y="311" width="1" height="5" fill="#000" />
<text x="934" y="327" font-size="10.5" fill="#000" class="k" text-anchor="middle" >0,08</text>
<rect x="987" y="311" width="1" height="5" fill="#000" />
<text x="986" y="327" font-size="10.5" fill="#000" class="k" text-anchor="middle" >0,09</text>
<rect x="1038" y="311" width="1" height="5" fill="#000" />
<text x="1033" y="327" font-size="10.5" fill="#000" class="k" text-anchor="middle" >0,1</text>
<rect x="512" y="142" width="5" height="1" fill="#000" />
<text x="510" y="146" font-size="10.5" fill="#000" class="k" text-anchor="end" >2,5</text>
<rect x="512" y="160" width="5" height="1" fill="#000" />
<text x="510" y="164" font-size="10.5" fill="#000" class="k" text-anchor="end" >2</text>
<rect x="512" y="179" width="5" height="1" fill="#000" />
<text x="510" y="183" font-size="10.5" fill="#000" class="k" text-anchor="end" >1,5</text>
<rect x="512" y="197" width="5" height="1" fill="#000" />
<text x="510" y="201" font-size="10.5" fill="#000" class="k" text-anchor="end" >1</text>
<rect x="512" y="216" width="5" height="1" fill="#000" />
<text x="510" y="220" font-size="10.5" fill="#000" class="k" text-anchor="end" >0,5</text>
<rect x="512" y="234" width="5" height="1" fill="#000" />
<text x="510" y="238" font-size="10.5" fill="#000" class="k" text-anchor="end" >0</text>
<rect x="512" y="253" width="5" height="1" fill="#000" />
<text x="510" y="257" font-size="10.5" fill="#000" class="k" text-anchor="end" >-0,5</text>
<rect x="512" y="271" width="5" height="1" fill="#000" />
<text x="510" y="275" font-size="10.5" fill="#000" class="k" text-anchor="end" >-1</text>
<rect x="512" y="290" width="5" height="1" fill="#000" />
<text x="510" y="294" font-size="10.5" fill="#000" class="k" text-anchor="end" >-1,5</text>
<rect x="512" y="308" width="5" height="1" fill="#000" />
<text x="510" y="312" font-size="10.5" fill="#000" class="k" text-anchor="end" >-2</text>
<text x="777.5" y="341" font-size="10.5" fill="#000" class="k" text-anchor="middle" >Zeit</text>
<text transform="translate(484,226) rotate(-90)" font-size="10.5" text-anchor="middle">Amplitude</text>
<polyline points="519.5,269.8 524.7,191.4 1034.1,191.4" fill="none" stroke="#e86060" stroke-width="1.1" />
<polyline points="519.5,197.2 524.7,203.4 529.9,209.8 535.1,216.5 540.3,223.4 545.5,230.4 550.7,237.4 555.9,244.4 561.1,251.3 566.3,258.0 571.5,264.6 576.7,270.8 581.9,276.8 587.1,282.4 592.3,287.5 597.5,292.2 602.7,296.3 607.9,299.9 613.1,303.0 618.3,305.4 623.5,307.1 628.7,308.3 633.9,308.7 639.1,308.5 644.3,307.7 649.5,306.3 654.6,304.2 659.8,301.5 665.0,298.3 670.2,294.5 675.4,290.2 680.6,285.4 685.8,280.2 691.0,274.6 696.2,268.7 701.4,262.4 706.6,255.9 711.8,249.3 717.0,242.5 722.2,235.6 727.4,228.8 732.6,222.0 737.8,215.3 743.0,208.7 748.2,202.4 753.4,196.4 758.6,190.7 763.8,185.4 769.0,180.5 774.2,176.1 779.4,172.1 784.6,168.8 789.8,165.9 795.0,163.7 800.2,162.1 805.4,161.1 810.6,160.8 815.8,161.0 821.0,161.9 826.2,163.5 831.4,165.6 836.6,168.3 841.8,171.6 847.0,175.4 852.2,179.7 857.4,184.5 862.6,189.7 867.8,195.4 873.0,201.3 878.2,207.5 883.4,214.0 888.6,220.6 893.8,227.4 899.0,234.2 904.2,241.0 909.3,247.8 914.5,254.4 919.7,260.9 924.9,267.2 930.1,273.2 935.3,278.8 940.5,284.1 945.7,289.0 950.9,293.4 956.1,297.3 961.3,300.7 966.5,303.5 971.7,305.7 976.9,307.4 982.1,308.4 987.3,308.7 992.5,308.5 997.7,307.5 1002.9,305.9 1008.1,303.6 1013.3,300.6 1018.5,297.1 1023.7,292.9 1028.9,288.2 1034.1,283.0" fill="none" stroke="#f4f4f4" stroke-width="1.1" />
<text x="447.5" y="126.5" font-size="10.5" fill="#000" class="k" >Signalverlaufsgraph</text>
<rect x="440" y="348" width="112" height="45" fill="#c8c8c8" />
<rect x="440" y="348" width="6" height="45" fill="url(#bevL)" />
<rect x="440" y="348" width="112" height="3" fill="url(#bevT)" />
<rect x="540" y="348" width="12" height="45" fill="url(#bevR)" />
<rect x="440" y="390" width="112" height="3" fill="url(#bevB)" />
<rect x="509" y="352" width="28" height="16" fill="#000" />
<polyline points="511,364 519,355.5 527,364 535,355.5" fill="none" stroke="#fff" stroke-width="1" />
<text x="454.5" y="362.5" font-size="10.5" fill="#000" class="k" >Dev1/ai0</text>
<rect x="509" y="374" width="28" height="16" fill="#000" />
<polyline points="511,386 519,377.5 527,386 535,377.5" fill="none" stroke="#e04848" stroke-width="1" />
<text x="454.5" y="384.5" font-size="10.5" fill="#000" class="k" >Dev1/ai1</text>
<text x="1070" y="140.5" font-size="10.5" fill="#000" class="k" >Amplitude Quelle</text>
<rect x="1070" y="145" width="75" height="189" fill="#afafaf" />
<rect x="1070" y="145" width="75" height="2" fill="#8e8e8e" />
<rect x="1070" y="145" width="2" height="189" fill="#949494" />
<rect x="1071" y="332" width="74" height="2" fill="#cdcdcd" />
<rect x="1143" y="146" width="2" height="188" fill="#cdcdcd" />
<rect x="1073" y="148" width="54" height="23" fill="#aeaeae" />
<rect x="1073" y="148" width="54" height="2" fill="#8a8a8a" />
<rect x="1073" y="148" width="2" height="23" fill="#909090" />
<rect x="1074" y="169" width="53" height="2" fill="#cacaca" />
<rect x="1125" y="149" width="2" height="22" fill="#cacaca" />
<rect x="1077" y="153" width="46" height="14" fill="#dadada" />
<svg x="1077" y="153" width="46" height="14" viewBox="1077 153 46 14"><text x="1079" y="164" font-size="10.5" fill="#000" class="k" >1,01563</text></svg>
<rect x="1073" y="171" width="54" height="23" fill="#aeaeae" />
<rect x="1073" y="171" width="54" height="2" fill="#8a8a8a" />
<rect x="1073" y="171" width="2" height="23" fill="#909090" />
<rect x="1074" y="192" width="53" height="2" fill="#cacaca" />
<rect x="1125" y="172" width="2" height="22" fill="#cacaca" />
<rect x="1077" y="176" width="46" height="14" fill="#dadada" />
<svg x="1077" y="176" width="46" height="14" viewBox="1077 176 46 14"><text x="1079" y="187" font-size="10.5" fill="#000" class="k" >0,844727</text></svg>
<rect x="1073" y="194" width="54" height="23" fill="#aeaeae" />
<rect x="1073" y="194" width="54" height="2" fill="#8a8a8a" />
<rect x="1073" y="194" width="2" height="23" fill="#909090" />
<rect x="1074" y="215" width="53" height="2" fill="#cacaca" />
<rect x="1125" y="195" width="2" height="22" fill="#cacaca" />
<rect x="1077" y="199" width="46" height="14" fill="#dadada" />
<svg x="1077" y="199" width="46" height="14" viewBox="1077 199 46 14"><text x="1079" y="210" font-size="10.5" fill="#000" class="k" >0,668945</text></svg>
<rect x="1073" y="217" width="54" height="23" fill="#aeaeae" />
<rect x="1073" y="217" width="54" height="2" fill="#8a8a8a" />
<rect x="1073" y="217" width="2" height="23" fill="#909090" />
<rect x="1074" y="238" width="53" height="2" fill="#cacaca" />
<rect x="1125" y="218" width="2" height="22" fill="#cacaca" />
<rect x="1077" y="222" width="46" height="14" fill="#dadada" />
<svg x="1077" y="222" width="46" height="14" viewBox="1077 222 46 14"><text x="1079" y="233" font-size="10.5" fill="#000" class="k" >0,488281</text></svg>
<rect x="1073" y="240" width="54" height="23" fill="#aeaeae" />
<rect x="1073" y="240" width="54" height="2" fill="#8a8a8a" />
<rect x="1073" y="240" width="2" height="23" fill="#909090" />
<rect x="1074" y="261" width="53" height="2" fill="#cacaca" />
<rect x="1125" y="241" width="2" height="22" fill="#cacaca" />
<rect x="1077" y="245" width="46" height="14" fill="#dadada" />
<svg x="1077" y="245" width="46" height="14" viewBox="1077 245 46 14"><text x="1079" y="256" font-size="10.5" fill="#000" class="k" >0,307617</text></svg>
<rect x="1073" y="263" width="54" height="23" fill="#aeaeae" />
<rect x="1073" y="263" width="54" height="2" fill="#8a8a8a" />
<rect x="1073" y="263" width="2" height="23" fill="#909090" />
<rect x="1074" y="284" width="53" height="2" fill="#cacaca" />
<rect x="1125" y="264" width="2" height="22" fill="#cacaca" />
<rect x="1077" y="268" width="46" height="14" fill="#dadada" />
<svg x="1077" y="268" width="46" height="14" viewBox="1077 268 46 14"><text x="1079" y="279" font-size="10.5" fill="#000" class="k" >0,12207</text></svg>
<rect x="1073" y="286" width="54" height="23" fill="#aeaeae" />
<rect x="1073" y="286" width="54" height="2" fill="#8a8a8a" />
<rect x="1073" y="286" width="2" height="23" fill="#909090" />
<rect x="1074" y="307" width="53" height="2" fill="#cacaca" />
<rect x="1125" y="287" width="2" height="22" fill="#cacaca" />
<rect x="1077" y="291" width="46" height="14" fill="#dadada" />
<svg x="1077" y="291" width="46" height="14" viewBox="1077 291 46 14"><text x="1079" y="302" font-size="10.5" fill="#000" class="k" >-0,068359</text></svg>
<rect x="1073" y="309" width="54" height="23" fill="#aeaeae" />
<rect x="1073" y="309" width="54" height="2" fill="#8a8a8a" />
<rect x="1073" y="309" width="2" height="23" fill="#909090" />
<rect x="1074" y="330" width="53" height="2" fill="#cacaca" />
<rect x="1125" y="310" width="2" height="22" fill="#cacaca" />
<rect x="1077" y="314" width="46" height="14" fill="#dadada" />
<svg x="1077" y="314" width="46" height="14" viewBox="1077 314 46 14"><text x="1079" y="325" font-size="10.5" fill="#000" class="k" >-0,253906</text></svg>
<rect x="1128" y="147" width="15" height="184" fill="#fbfbf8" />
<rect x="1128.5" y="148.5" width="14" height="14" rx="2" fill="#c3d5fc" stroke="#dfe8fd" stroke-width="1"/><path d="M1142.5 150V162.5H1130" stroke="#a0b4e8" stroke-width="1" fill="none"/><path d="M1131.5 157.5l4-4l4 4" fill="none" stroke="#4d6185" stroke-width="2.2"/>
<rect x="1128.5" y="316.5" width="14" height="14" rx="2" fill="#c3d5fc" stroke="#dfe8fd" stroke-width="1"/><path d="M1142.5 318V330.5H1130" stroke="#a0b4e8" stroke-width="1" fill="none"/><path d="M1131.5 321.5l4 4l4-4" fill="none" stroke="#4d6185" stroke-width="2.2"/>
<rect x="1128.5" y="164.5" width="14" height="15" rx="2" fill="#c3d5fc" stroke="#fff"/>
<rect x="1132" y="168" width="7" height="1" fill="#8cb0f8" />
<rect x="1132" y="170" width="7" height="1" fill="#8cb0f8" />
<rect x="1132" y="172" width="7" height="1" fill="#8cb0f8" />
<rect x="1132" y="174" width="7" height="1" fill="#8cb0f8" />
<text x="1158" y="139.5" font-size="10.5" fill="#000" class="k" >Amplitude Loop</text>
<rect x="1159" y="144" width="74" height="189" fill="#afafaf" />
<rect x="1159" y="144" width="74" height="2" fill="#8e8e8e" />
<rect x="1159" y="144" width="2" height="189" fill="#949494" />
<rect x="1160" y="331" width="73" height="2" fill="#cdcdcd" />
<rect x="1231" y="145" width="2" height="188" fill="#cdcdcd" />
<rect x="1161" y="147" width="54" height="23" fill="#aeaeae" />
<rect x="1161" y="147" width="54" height="2" fill="#8a8a8a" />
<rect x="1161" y="147" width="2" height="23" fill="#909090" />
<rect x="1162" y="168" width="53" height="2" fill="#cacaca" />
<rect x="1213" y="148" width="2" height="22" fill="#cacaca" />
<rect x="1165" y="152" width="46" height="14" fill="#dadada" />
<svg x="1165" y="152" width="46" height="14" viewBox="1165 152 46 14"><text x="1167" y="163" font-size="10.5" fill="#000" class="k" >-0,947266</text></svg>
<rect x="1161" y="170" width="54" height="23" fill="#aeaeae" />
<rect x="1161" y="170" width="54" height="2" fill="#8a8a8a" />
<rect x="1161" y="170" width="2" height="23" fill="#909090" />
<rect x="1162" y="191" width="53" height="2" fill="#cacaca" />
<rect x="1213" y="171" width="2" height="22" fill="#cacaca" />
<rect x="1165" y="175" width="46" height="14" fill="#dadada" />
<svg x="1165" y="175" width="46" height="14" viewBox="1165 175 46 14"><text x="1167" y="186" font-size="10.5" fill="#000" class="k" >1,17188</text></svg>
<rect x="1161" y="193" width="54" height="23" fill="#aeaeae" />
<rect x="1161" y="193" width="54" height="2" fill="#8a8a8a" />
<rect x="1161" y="193" width="2" height="23" fill="#909090" />
<rect x="1162" y="214" width="53" height="2" fill="#cacaca" />
<rect x="1213" y="194" width="2" height="22" fill="#cacaca" />
<rect x="1165" y="198" width="46" height="14" fill="#dadada" />
<svg x="1165" y="198" width="46" height="14" viewBox="1165 198 46 14"><text x="1167" y="209" font-size="10.5" fill="#000" class="k" >1,17188</text></svg>
<rect x="1161" y="216" width="54" height="23" fill="#aeaeae" />
<rect x="1161" y="216" width="54" height="2" fill="#8a8a8a" />
<rect x="1161" y="216" width="2" height="23" fill="#909090" />
<rect x="1162" y="237" width="53" height="2" fill="#cacaca" />
<rect x="1213" y="217" width="2" height="22" fill="#cacaca" />
<rect x="1165" y="221" width="46" height="14" fill="#dadada" />
<svg x="1165" y="221" width="46" height="14" viewBox="1165 221 46 14"><text x="1167" y="232" font-size="10.5" fill="#000" class="k" >1,17188</text></svg>
<rect x="1161" y="239" width="54" height="23" fill="#aeaeae" />
<rect x="1161" y="239" width="54" height="2" fill="#8a8a8a" />
<rect x="1161" y="239" width="2" height="23" fill="#909090" />
<rect x="1162" y="260" width="53" height="2" fill="#cacaca" />
<rect x="1213" y="240" width="2" height="22" fill="#cacaca" />
<rect x="1165" y="244" width="46" height="14" fill="#dadada" />
<svg x="1165" y="244" width="46" height="14" viewBox="1165 244 46 14"><text x="1167" y="255" font-size="10.5" fill="#000" class="k" >1,17188</text></svg>
<rect x="1161" y="262" width="54" height="23" fill="#aeaeae" />
<rect x="1161" y="262" width="54" height="2" fill="#8a8a8a" />
<rect x="1161" y="262" width="2" height="23" fill="#909090" />
<rect x="1162" y="283" width="53" height="2" fill="#cacaca" />
<rect x="1213" y="263" width="2" height="22" fill="#cacaca" />
<rect x="1165" y="267" width="46" height="14" fill="#dadada" />
<svg x="1165" y="267" width="46" height="14" viewBox="1165 267 46 14"><text x="1167" y="278" font-size="10.5" fill="#000" class="k" >1,17188</text></svg>
<rect x="1161" y="285" width="54" height="23" fill="#aeaeae" />
<rect x="1161" y="285" width="54" height="2" fill="#8a8a8a" />
<rect x="1161" y="285" width="2" height="23" fill="#909090" />
<rect x="1162" y="306" width="53" height="2" fill="#cacaca" />
<rect x="1213" y="286" width="2" height="22" fill="#cacaca" />
<rect x="1165" y="290" width="46" height="14" fill="#dadada" />
<svg x="1165" y="290" width="46" height="14" viewBox="1165 290 46 14"><text x="1167" y="301" font-size="10.5" fill="#000" class="k" >1,17188</text></svg>
<rect x="1161" y="308" width="54" height="23" fill="#aeaeae" />
<rect x="1161" y="308" width="54" height="2" fill="#8a8a8a" />
<rect x="1161" y="308" width="2" height="23" fill="#909090" />
<rect x="1162" y="329" width="53" height="2" fill="#cacaca" />
<rect x="1213" y="309" width="2" height="22" fill="#cacaca" />
<rect x="1165" y="313" width="46" height="14" fill="#dadada" />
<svg x="1165" y="313" width="46" height="14" viewBox="1165 313 46 14"><text x="1167" y="324" font-size="10.5" fill="#000" class="k" >1,17188</text></svg>
<rect x="1215" y="146" width="16" height="184" fill="#fbfbf8" />
<rect x="1215.5" y="147.5" width="15" height="14" rx="2" fill="#c3d5fc" stroke="#dfe8fd" stroke-width="1"/><path d="M1230.5 149V161.5H1217" stroke="#a0b4e8" stroke-width="1" fill="none"/><path d="M1219.0 156.5l4-4l4 4" fill="none" stroke="#4d6185" stroke-width="2.2"/>
<rect x="1215.5" y="315.5" width="15" height="14" rx="2" fill="#c3d5fc" stroke="#dfe8fd" stroke-width="1"/><path d="M1230.5 317V329.5H1217" stroke="#a0b4e8" stroke-width="1" fill="none"/><path d="M1219.0 320.5l4 4l4-4" fill="none" stroke="#4d6185" stroke-width="2.2"/>
<rect x="1215.5" y="163.5" width="15" height="15" rx="2" fill="#c3d5fc" stroke="#fff"/>
<rect x="1219" y="167" width="8" height="1" fill="#8cb0f8" />
<rect x="1219" y="169" width="8" height="1" fill="#8cb0f8" />
<rect x="1219" y="171" width="8" height="1" fill="#8cb0f8" />
<rect x="1219" y="173" width="8" height="1" fill="#8cb0f8" />
<g filter="url(#wmblur)"><g transform="translate(2,1.5)" fill="#8c8c8c"><path d="M936 373Q944 368 953 367.5Q958 368 961 370.5L984 394.5V397L968 405.5Q958 392 951 384Q944 376 936 374.5z"/><path d="M969.5 371.5Q980 367.5 994.5 367.5L986 392L981.5 387.5L986.5 373.5Q979 374 974.5 377z"/><path d="M953.5 391L963.5 402V408L949 421.5Q948 405 953.5 391z"/></g></g><g><g transform="translate(0,-1)" fill="#d4d4d4"><path d="M936 373Q944 368 953 367.5Q958 368 961 370.5L984 394.5V397L968 405.5Q958 392 951 384Q944 376 936 374.5z"/><path d="M969.5 371.5Q980 367.5 994.5 367.5L986 392L981.5 387.5L986.5 373.5Q979 374 974.5 377z"/><path d="M953.5 391L963.5 402V408L949 421.5Q948 405 953.5 391z"/></g></g>
<g filter="url(#wmblur)"><text x="996" y="389.0" font-size="26" fill="#8c8c8c" font-weight="bold" font-family="'Liberation Sans',sans-serif" textLength="127" lengthAdjust="spacingAndGlyphs" stroke="#8c8c8c" stroke-width="1.1" stroke-linejoin="round">NATIONAL</text></g><g><text x="994" y="386.5" font-size="26" fill="#d4d4d4" font-weight="bold" font-family="'Liberation Sans',sans-serif" textLength="127" lengthAdjust="spacingAndGlyphs" stroke="#d4d4d4" stroke-width="1.1" stroke-linejoin="round">NATIONAL</text></g>
<g filter="url(#wmblur)"><text x="988" y="411.5" font-size="26" fill="#8c8c8c" font-weight="bold" font-family="'Liberation Sans',sans-serif" textLength="175" lengthAdjust="spacingAndGlyphs" stroke="#8c8c8c" stroke-width="1.1" stroke-linejoin="round">INSTRUMENTS</text><text x="1165" y="399.5" font-size="8" fill="#8c8c8c" font-weight="bold" font-family="'Liberation Sans',sans-serif" >™</text></g><g><text x="986" y="409" font-size="26" fill="#d4d4d4" font-weight="bold" font-family="'Liberation Sans',sans-serif" textLength="175" lengthAdjust="spacingAndGlyphs" stroke="#d4d4d4" stroke-width="1.1" stroke-linejoin="round">INSTRUMENTS</text><text x="1163" y="397" font-size="8" fill="#d4d4d4" font-weight="bold" font-family="'Liberation Sans',sans-serif" >™</text></g>
<g filter="url(#wmblur)"><text x="964" y="442.0" font-size="26" fill="#8c8c8c" font-weight="bold" font-family="'Liberation Sans',sans-serif" textLength="88" lengthAdjust="spacingAndGlyphs" stroke="#8c8c8c" stroke-width="1.1" stroke-linejoin="round">LabVIEW</text><text x="1064" y="442.0" font-size="26" fill="#8c8c8c" font-weight="bold" font-family="'Liberation Sans',sans-serif" textLength="188" lengthAdjust="spacingAndGlyphs" stroke="#8c8c8c" stroke-width="1.1" stroke-linejoin="round">Studentenversion</text><text x="1053" y="432.5" font-size="10" fill="#8c8c8c" font-weight="bold" font-family="'Liberation Sans',sans-serif" >™</text></g><g><text x="962" y="439.5" font-size="26" fill="#d4d4d4" font-weight="bold" font-family="'Liberation Sans',sans-serif" textLength="88" lengthAdjust="spacingAndGlyphs" stroke="#d4d4d4" stroke-width="1.1" stroke-linejoin="round">LabVIEW</text><text x="1062" y="439.5" font-size="26" fill="#d4d4d4" font-weight="bold" font-family="'Liberation Sans',sans-serif" textLength="188" lengthAdjust="spacingAndGlyphs" stroke="#d4d4d4" stroke-width="1.1" stroke-linejoin="round">Studentenversion</text><text x="1051" y="430" font-size="10" fill="#d4d4d4" font-weight="bold" font-family="'Liberation Sans',sans-serif" >™</text></g>
</svg>
</section>
<section id="blockdiagram-window">
<svg style="position:absolute;left:0;top:471px" width="1280" height="523" viewBox="0 471 1280 523" font-family="'DejaVu Sans Condensed','Liberation Sans',sans-serif" font-size="10.5" text-rendering="geometricPrecision"><defs>
<pattern id="hatch" width="3" height="3" patternUnits="userSpaceOnUse" patternTransform="rotate(-45)">
 <rect width="3" height="3" fill="#fff6e8"/><rect width="1.4" height="3" fill="#e8903c"/>
</pattern>
</defs>
<rect x="0" y="471" width="1280" height="523" fill="#8092de" />
<rect x="0" y="471" width="1280" height="29" fill="url(#tI)" />
<rect x="0" y="471" width="1280" height="1" fill="#5f78d4" />
<rect x="0" y="472" width="1" height="522" fill="#5c6cc4" />
<rect x="1" y="501" width="1" height="493" fill="#7080d8" />
<rect x="2" y="501" width="4" height="489" fill="#7e90e2" />
<rect x="1279" y="472" width="1" height="522" fill="#4a5ab8" />
<rect x="1278" y="501" width="1" height="493" fill="#5a6cd0" />
<rect x="1274" y="501" width="4" height="489" fill="#6c7edc" />
<rect x="0" y="988" width="1280" height="5" fill="#6a78d8" />
<rect x="0" y="993" width="1280" height="1" fill="#5866c8" />
<rect x="6" y="501" width="1268" height="487" fill="#ece9d8" />
<rect x="6" y="500" width="1" height="488" fill="#77756a" />
<rect x="6" y="500" width="1268" height="1" fill="#77756a" />
<rect x="7" y="501" width="1" height="485" fill="#d8d4c8" />
<rect x="7" y="986" width="1266" height="2" fill="#fff" />
<rect x="1272" y="502" width="2" height="486" fill="#fff" />
<rect x="11" y="479" width="11" height="14" fill="#202020" /><rect x="12" y="479.5" width="1" height="1.5" fill="#d0d0d0" /><rect x="12" y="491" width="1" height="1.5" fill="#d0d0d0" /><rect x="14" y="479.5" width="1" height="1.5" fill="#d0d0d0" /><rect x="14" y="491" width="1" height="1.5" fill="#d0d0d0" /><rect x="16" y="479.5" width="1" height="1.5" fill="#d0d0d0" /><rect x="16" y="491" width="1" height="1.5" fill="#d0d0d0" /><rect x="18" y="479.5" width="1" height="1.5" fill="#d0d0d0" /><rect x="18" y="491" width="1" height="1.5" fill="#d0d0d0" /><rect x="20" y="479.5" width="1" height="1.5" fill="#d0d0d0" /><rect x="20" y="491" width="1" height="1.5" fill="#d0d0d0" /><rect x="12" y="482" width="9" height="8" fill="#104010" /><path d="M12 481.5l8 4.5l-8 4.5z" fill="#f8d820" stroke="#c09000" stroke-width="0.6"/><path d="M14 486h3M15.5 484.5v3" stroke="#000" stroke-width="0.9"/><path d="M8 484.5h4" stroke="#e02020" stroke-width="1.2"/><path d="M8 488.5h4" stroke="#2020e0" stroke-width="1.2"/><path d="M20 486h4" stroke="#e02020" stroke-width="1.2"/>
<rect x="1205.5" y="477.0" width="19" height="19" rx="3" fill="url(#btnBi)" stroke="#fff" stroke-width="1" stroke-opacity="0.8"/>
<rect x="1228.5" y="477.0" width="19" height="19" rx="3" fill="url(#btnBi)" stroke="#fff" stroke-width="1" stroke-opacity="0.8"/>
<rect x="1251.5" y="477.0" width="19" height="19" rx="3" fill="url(#btnRi)" stroke="#fff" stroke-width="1" stroke-opacity="0.8"/>
<rect x="1210" y="488.5" width="7" height="3" fill="#fff" />
<rect x="1233.5" y="482.5" width="9" height="8" fill="none" stroke="#fff" stroke-width="1"/>
<rect x="1233" y="481.5" width="10" height="3" fill="#fff" />
<path d="M1256.5 482.0L1265.5 491.0M1265.5 482.0L1256.5 491.0" stroke="#fff" stroke-width="2.2" stroke-linecap="square"/>
<rect x="8" y="501" width="1264" height="21" fill="#efecdf" />
<text x="13.5" y="515" font-size="10.5" fill="#000"><tspan text-decoration="underline">D</tspan>atei</text>
<text x="50.5" y="515" font-size="10.5" fill="#000"><tspan text-decoration="underline">B</tspan>earbeiten</text>
<text x="115" y="515" font-size="10.5" fill="#000"><tspan text-decoration="underline">A</tspan>nsicht</text>
<text x="161.5" y="515" font-size="10.5" fill="#000"><tspan text-decoration="underline">P</tspan>rojekt</text>
<text x="208" y="515" font-size="10.5" fill="#000">Ausfü<tspan text-decoration="underline">h</tspan>ren</text>
<text x="270" y="515" font-size="10.5" fill="#000"><tspan text-decoration="underline">W</tspan>erkzeuge</text>
<text x="335.5" y="515" font-size="10.5" fill="#000"><tspan text-decoration="underline">F</tspan>enster</text>
<text x="384.5" y="515" font-size="10.5" fill="#000"><tspan text-decoration="underline">H</tspan>ilfe</text>
<rect x="8" y="522" width="1264" height="1" fill="#cbc7b4" />
<rect x="8" y="523" width="1264" height="1" fill="#fbfaf5" />
<rect x="8" y="524" width="1264" height="23" fill="#efecdf" />
<rect x="59" y="525" width="21" height="21" fill="url(#tbBtn)" />
<rect x="59" y="525" width="21" height="1" fill="#fff" />
<rect x="59" y="525" width="1" height="21" fill="#fff" />
<rect x="60" y="544" width="20" height="1" fill="#8e8b7a" />
<rect x="78" y="526" width="1" height="20" fill="#8e8b7a" />
<rect x="59" y="545" width="21" height="1" fill="#45433a" />
<rect x="79" y="525" width="1" height="21" fill="#45433a" />
<path d="M62.5 532.5h6v-4l7 6.5l-7 6.5v-4h-6z" fill="#fff" stroke="#000" stroke-width="1.3" stroke-linejoin="miter"/>
<rect x="80" y="525" width="21" height="21" fill="url(#tbBtn)" />
<rect x="80" y="525" width="21" height="1" fill="#fff" />
<rect x="80" y="525" width="1" height="21" fill="#fff" />
<rect x="81" y="544" width="20" height="1" fill="#8e8b7a" />
<rect x="99" y="526" width="1" height="20" fill="#8e8b7a" />
<rect x="80" y="545" width="21" height="1" fill="#45433a" />
<rect x="100" y="525" width="1" height="21" fill="#45433a" />
<g fill="none" stroke="#000" stroke-width="1.9"><path d="M84.0 536.0v-4h8"/><path d="M96.0 534.0v4h-8"/><path d="M91.0 529.0l3.5 3l-3.5 3" /><path d="M89.0 541.0l-3.5-3l3.5-3"/><path d="M86.5 539.0a5 5 0 0 1 0-8M93.5 531.0a5 5 0 0 1 0 8" stroke-width="1.2"/></g>
<rect x="106" y="525" width="20" height="21" fill="#f3f1e6" />
<rect x="106" y="525" width="20" height="1" fill="#fff" />
<rect x="106" y="525" width="1" height="21" fill="#fff" />
<rect x="106" y="545" width="20" height="1" fill="#d0ccb8" />
<rect x="125" y="525" width="1" height="21" fill="#d0ccb8" />
<circle cx="115.5" cy="535.0" r="8" fill="#dcd8cc" stroke="#b4b0a4" stroke-width="1"/><polygon points="112.9,529.0 118.1,529.0 121.5,532.4 121.5,537.6 118.1,541.0 112.9,541.0 109.5,537.6 109.5,532.4" fill="#ec7878" stroke="#c86464" stroke-width="1"/>
<rect x="127" y="525" width="22" height="21" fill="url(#tbBtn)" />
<rect x="127" y="525" width="22" height="1" fill="#fff" />
<rect x="127" y="525" width="1" height="21" fill="#fff" />
<rect x="128" y="544" width="21" height="1" fill="#8e8b7a" />
<rect x="147" y="526" width="1" height="20" fill="#8e8b7a" />
<rect x="127" y="545" width="22" height="1" fill="#45433a" />
<rect x="148" y="525" width="1" height="21" fill="#45433a" />
<rect x="132.5" y="530.0" width="4" height="10" fill="#000" /><rect x="138.5" y="530.0" width="4" height="10" fill="#000" />
<rect x="153" y="525" width="21" height="21" fill="url(#tbBtn)" />
<rect x="153" y="525" width="21" height="1" fill="#fff" />
<rect x="153" y="525" width="1" height="21" fill="#fff" />
<rect x="154" y="544" width="20" height="1" fill="#8e8b7a" />
<rect x="172" y="526" width="1" height="20" fill="#8e8b7a" />
<rect x="153" y="545" width="21" height="1" fill="#45433a" />
<rect x="173" y="525" width="1" height="21" fill="#45433a" />
<circle cx="163.0" cy="533.0" r="5" fill="#fff" stroke="#000" stroke-width="1.2"/><rect x="160.5" y="538.0" width="5" height="4.5" fill="#e8c840" stroke="#000" stroke-width="1" /><path d="M161.0 533.0l2 2l2-2M163.0 535.0v3" fill="none" stroke="#000" stroke-width="0.8"/>
<rect x="179" y="525" width="22" height="21" fill="url(#tbBtn)" />
<rect x="179" y="525" width="22" height="1" fill="#fff" />
<rect x="179" y="525" width="1" height="21" fill="#fff" />
<rect x="180" y="544" width="21" height="1" fill="#8e8b7a" />
<rect x="199" y="526" width="1" height="20" fill="#8e8b7a" />
<rect x="179" y="545" width="22" height="1" fill="#45433a" />
<rect x="200" y="525" width="1" height="21" fill="#45433a" />
<circle cx="184.5" cy="531.0" r="3" fill="#fff" stroke="#000" stroke-width="1.2"/><path d="M184.5 534.0v6M181.5 540.0h6" stroke="#000" stroke-width="1.2" fill="none"/><rect x="189.5" y="530.0" width="8" height="5" fill="#b8c8e0" stroke="#8090a8" stroke-width="1" /><path d="M181.5 542.0h10" stroke="#2030c0" stroke-width="1.2"/><rect x="190.5" y="538.0" width="4" height="4" fill="#fff" stroke="#309030" stroke-width="1" /><path d="M194.5 540.0h3l-1.5-1.5M197.5 540.0l-1.5 1.5" stroke="#309030" stroke-width="1" fill="none"/>
<rect x="205" y="525" width="21" height="21" fill="url(#tbBtn)" />
<rect x="205" y="525" width="21" height="1" fill="#fff" />
<rect x="205" y="525" width="1" height="21" fill="#fff" />
<rect x="206" y="544" width="20" height="1" fill="#8e8b7a" />
<rect x="224" y="526" width="1" height="20" fill="#8e8b7a" />
<rect x="205" y="545" width="21" height="1" fill="#45433a" />
<rect x="225" y="525" width="1" height="21" fill="#45433a" />
<path d="M209.0 528.0v9h5" fill="none" stroke="#000" stroke-width="2.2"/><path d="M213.0 533.0l4.5 4l-4.5 4z" fill="#000"/><rect x="216.5" y="535.5" width="6" height="6" fill="#fff" stroke="#000" stroke-width="1.5" />
<rect x="226" y="525" width="21" height="21" fill="url(#tbBtn)" />
<rect x="226" y="525" width="21" height="1" fill="#fff" />
<rect x="226" y="525" width="1" height="21" fill="#fff" />
<rect x="227" y="544" width="20" height="1" fill="#8e8b7a" />
<rect x="245" y="526" width="1" height="20" fill="#8e8b7a" />
<rect x="226" y="545" width="21" height="1" fill="#45433a" />
<rect x="246" y="525" width="1" height="21" fill="#45433a" />
<rect x="229.5" y="533.5" width="9" height="8" fill="#fff" stroke="#000" stroke-width="1.6" /><rect x="232.5" y="536.5" width="3" height="2.5" fill="#fff" stroke="#000" stroke-width="1" /><path d="M231.0 533.0v-4h8" fill="none" stroke="#000" stroke-width="2.2"/><path d="M238.0 526.0l5.5 4.5l-5.5 4.5z" fill="#000"/>
<rect x="248" y="525" width="21" height="21" fill="#f3f1e6" />
<rect x="248" y="525" width="21" height="1" fill="#fff" />
<rect x="248" y="525" width="1" height="21" fill="#fff" />
<rect x="248" y="545" width="21" height="1" fill="#d0ccb8" />
<rect x="268" y="525" width="1" height="21" fill="#d0ccb8" />
<rect x="251.0" y="535.0" width="6" height="6" fill="#ece9d8" stroke="#a8a494" stroke-width="1.4" /><path d="M257.0 540.0h4v-6" fill="none" stroke="#a8a494" stroke-width="2"/><path d="M257.0 534.0l4-5l4 5z" fill="#a8a494"/>
<rect x="272" y="525" width="161" height="21" fill="url(#tbBtn)" />
<rect x="272" y="525" width="161" height="1" fill="#fff" />
<rect x="272" y="525" width="1" height="21" fill="#fff" />
<rect x="273" y="544" width="160" height="1" fill="#8e8b7a" />
<rect x="431" y="526" width="1" height="20" fill="#8e8b7a" />
<rect x="272" y="545" width="161" height="1" fill="#45433a" />
<rect x="432" y="525" width="1" height="21" fill="#45433a" /><text x="278" y="539.5" font-size="10.5" fill="#000" class="k" >13pt Anwendungsschriftart</text><rect x="412" y="528" width="1" height="14" fill="#aca899" /><rect x="413" y="528" width="1" height="14" fill="#fff" /><path d="M418.5 534.0h8l-4.0 4z" fill="#000"/>
<rect x="436" y="525" width="33" height="21" fill="url(#tbBtn)" />
<rect x="436" y="525" width="33" height="1" fill="#fff" />
<rect x="436" y="525" width="1" height="21" fill="#fff" />
<rect x="437" y="544" width="32" height="1" fill="#8e8b7a" />
<rect x="467" y="526" width="1" height="20" fill="#8e8b7a" />
<rect x="436" y="545" width="33" height="1" fill="#45433a" />
<rect x="468" y="525" width="1" height="21" fill="#45433a" />
<rect x="443.0" y="528.0" width="4" height="4" fill="#30a030" stroke="#000" stroke-width="1" /><path d="M445.0 533.0v5M443.0 536.0l2 2l2-2M442.0 541.0h3M447.0 541.0h2" stroke="#000" stroke-width="1" fill="none"/><rect x="449.0" y="536.0" width="7" height="5" fill="#f0e060" stroke="#000" stroke-width="1" /><path d="M457.5 534.5h7l-3.5 4z" fill="#000"/>
<rect x="472" y="525" width="33" height="21" fill="url(#tbBtn)" />
<rect x="472" y="525" width="33" height="1" fill="#fff" />
<rect x="472" y="525" width="1" height="21" fill="#fff" />
<rect x="473" y="544" width="32" height="1" fill="#8e8b7a" />
<rect x="503" y="526" width="1" height="20" fill="#8e8b7a" />
<rect x="472" y="545" width="33" height="1" fill="#45433a" />
<rect x="504" y="525" width="1" height="21" fill="#45433a" />
<path d="M478.0 529.0h5l1-1.5l1 1.5h5" stroke="#000" stroke-width="1" fill="none"/><rect x="477.0" y="535.0" width="2" height="3" fill="#000" /><rect x="481.0" y="532.0" width="3" height="9" fill="#f0e060" stroke="#000" stroke-width="1" /><rect x="486.0" y="535.0" width="5" height="6" fill="#30a030" stroke="#000" stroke-width="1" /><path d="M493.5 534.5h7l-3.5 4z" fill="#000"/>
<rect x="511" y="525" width="33" height="21" fill="url(#tbBtn)" />
<rect x="511" y="525" width="33" height="1" fill="#fff" />
<rect x="511" y="525" width="1" height="21" fill="#fff" />
<rect x="512" y="544" width="32" height="1" fill="#8e8b7a" />
<rect x="542" y="526" width="1" height="20" fill="#8e8b7a" />
<rect x="511" y="545" width="33" height="1" fill="#45433a" />
<rect x="543" y="525" width="1" height="21" fill="#45433a" />
<path d="M518.58 533.63A5 5 0 0 1 528.2 532.79" fill="none" stroke="#8c8c8c" stroke-width="3"/><path d="M528.42 535.37A5 5 0 0 1 518.8 536.21" fill="none" stroke="#585858" stroke-width="3"/><path d="M525.3 533.0h6.4l-3.2 4.2z" fill="#8c8c8c"/><path d="M515.3 536.0h6.4l-3.2-4.2z" fill="#585858"/><path d="M533.5 534.5h7l-3.5 4z" fill="#000"/>
<rect x="547" y="525" width="26" height="21" fill="url(#tbBtn)" />
<rect x="547" y="525" width="26" height="1" fill="#fff" />
<rect x="547" y="525" width="1" height="21" fill="#fff" />
<rect x="548" y="544" width="25" height="1" fill="#8e8b7a" />
<rect x="571" y="526" width="1" height="20" fill="#8e8b7a" />
<rect x="547" y="545" width="26" height="1" fill="#45433a" />
<rect x="572" y="525" width="1" height="21" fill="#45433a" />
<path d="M550.5 530.0l9 4.5l-9 4.5z" fill="#f8e020" stroke="#000" stroke-width="1"/><path d="M552.5 534.5h3M554.0 533.0v3" stroke="#000" stroke-width="1"/><path d="M565.5 526.0l-2 9" stroke="#604020" stroke-width="1.6"/><path d="M559.5 536.0l8 1l1 6l-11-2z" fill="#c89040" stroke="#805020" stroke-width="0.8"/>
<rect x="1213" y="525" width="22" height="21" fill="url(#tbBtn)" />
<rect x="1213" y="525" width="22" height="1" fill="#fff" />
<rect x="1213" y="525" width="1" height="21" fill="#fff" />
<rect x="1214" y="544" width="21" height="1" fill="#8e8b7a" />
<rect x="1233" y="526" width="1" height="20" fill="#8e8b7a" />
<rect x="1213" y="545" width="22" height="1" fill="#45433a" />
<rect x="1234" y="525" width="1" height="21" fill="#45433a" />
<path d="M1220.0 531.0a3.5 3.5 0 1 1 5.5 3q-2 1.5-2 3.5" fill="none" stroke="#000" stroke-width="3"/><path d="M1220.0 531.0a3.5 3.5 0 1 1 5.5 3q-2 1.5-2 3.5" fill="none" stroke="#f8f060" stroke-width="1.2"/><circle cx="1223.5" cy="541.0" r="1.6" fill="#f8f060" stroke="#000" stroke-width="0.9"/>
<rect x="8" y="547" width="1264" height="1" fill="#000" />
<rect x="1238" y="501" width="34" height="46" fill="#ece9d8" />
<rect x="1237" y="501" width="1" height="46" fill="#000" />
<rect x="1239.5" y="508.5" width="31" height="31" fill="#fff" stroke="#000" stroke-width="1" /><rect x="1242" y="511" width="17" height="12" fill="#d8d4c0" stroke="#000" stroke-width="1" /><rect x="1243" y="512" width="11" height="8" fill="#003000" /><path d="M1244 517q1.5-7 3 0t3 0t3-1" fill="none" stroke="#30ff30" stroke-width="1"/><circle cx="1256.5" cy="517" r="1" fill="none" stroke="#e08020" stroke-width="0.8"/><path d="M1255 513h3" stroke="#808080" stroke-width="1"/><path d="M1244 526q4 6 8 0" fill="none" stroke="#2030a0" stroke-width="1"/><path d="M1245 525h2l2 2l3-3h7" fill="none" stroke="#e03020" stroke-width="1"/><path d="M1249 524h10" stroke="#e08020" stroke-width="1"/><path d="M1259 521l6 3.5l-6 3.5z" fill="#f8e020" stroke="#a08000" stroke-width="0.8"/><path d="M1265 524.5h4" stroke="#e08020" stroke-width="1"/><text x="1263" y="538" font-size="10" fill="#000" class="k" font-family="'Liberation Sans',sans-serif" >1</text>
<rect x="1255" y="548" width="17" height="421" fill="url(#vTrack)" />
<rect x="1256.5" y="549.5" width="14" height="15" rx="2" fill="#c3d5fc" stroke="#dfe8fd" stroke-width="1"/><path d="M1270.5 551V564.5H1258" stroke="#a0b4e8" stroke-width="1" fill="none"/><path d="M1259.5 559.0l4-4l4 4" fill="none" stroke="#4d6185" stroke-width="2.2"/>
<rect x="1256.5" y="952.5" width="14" height="15" rx="2" fill="#c3d5fc" stroke="#dfe8fd" stroke-width="1"/><path d="M1270.5 954V967.5H1258" stroke="#a0b4e8" stroke-width="1" fill="none"/><path d="M1259.5 958.0l4 4l4-4" fill="none" stroke="#4d6185" stroke-width="2.2"/>
<rect x="1256.5" y="629.5" width="14" height="258" rx="2" fill="url(#vThumb)" stroke="#fff" stroke-width="1"/>
<path d="M1270.5 631V887.5H1258" stroke="#8ea2d8" stroke-width="1" fill="none" opacity="0.8"/>
<rect x="1260" y="755" width="6" height="1" fill="#eef4fe" />
<rect x="1261" y="756" width="6" height="1" fill="#8cb0f8" />
<rect x="1260" y="757" width="6" height="1" fill="#eef4fe" />
<rect x="1261" y="758" width="6" height="1" fill="#8cb0f8" />
<rect x="1260" y="759" width="6" height="1" fill="#eef4fe" />
<rect x="1261" y="760" width="6" height="1" fill="#8cb0f8" />
<rect x="1260" y="761" width="6" height="1" fill="#eef4fe" />
<rect x="1261" y="762" width="6" height="1" fill="#8cb0f8" />
<rect x="8" y="969" width="1247" height="17" fill="url(#hTrack)" />
<rect x="8.5" y="969.5" width="95" height="16" fill="#fff" stroke="#000" stroke-width="1" />
<text x="13.5" y="980" font-size="10.5" fill="#000" class="k" >Studentenversion</text>
<rect x="105.5" y="971.5" width="14" height="13" rx="2" fill="#c3d5fc" stroke="#dfe8fd" stroke-width="1"/><path d="M119.5 973V984.5H107" stroke="#a0b4e8" stroke-width="1" fill="none"/><path d="M114.5 974.0l-4 4l4 4" fill="none" stroke="#4d6185" stroke-width="2.2"/>
<rect x="1239.5" y="971.5" width="14" height="13" rx="2" fill="#c3d5fc" stroke="#dfe8fd" stroke-width="1"/><path d="M1253.5 973V984.5H1241" stroke="#a0b4e8" stroke-width="1" fill="none"/><path d="M1244.5 974.0l4 4l-4 4" fill="none" stroke="#4d6185" stroke-width="2.2"/>
<rect x="280.5" y="970.5" width="804" height="14" rx="2" fill="url(#hThumb)" stroke="#fff" stroke-width="1"/>
<path d="M1084.5 972v12M282 984.5h802" stroke="#8ea2d8" stroke-width="1" fill="none" opacity="0.8"/>
<rect x="679" y="974" width="1" height="6" fill="#eef4fe" />
<rect x="680" y="975" width="1" height="6" fill="#8cb0f8" />
<rect x="681" y="974" width="1" height="6" fill="#eef4fe" />
<rect x="682" y="975" width="1" height="6" fill="#8cb0f8" />
<rect x="683" y="974" width="1" height="6" fill="#eef4fe" />
<rect x="684" y="975" width="1" height="6" fill="#8cb0f8" />
<rect x="685" y="974" width="1" height="6" fill="#eef4fe" />
<rect x="686" y="975" width="1" height="6" fill="#8cb0f8" />
<rect x="1255" y="969" width="17" height="17" fill="#ece9d8" />
<rect x="1267" y="981" width="2" height="2" fill="#b8b4a0" />
<rect x="1268" y="982" width="1" height="1" fill="#fff" />
<rect x="1263" y="981" width="2" height="2" fill="#b8b4a0" />
<rect x="1264" y="982" width="1" height="1" fill="#fff" />
<rect x="1267" y="977" width="2" height="2" fill="#b8b4a0" />
<rect x="1268" y="978" width="1" height="1" fill="#fff" />
<rect x="1259" y="981" width="2" height="2" fill="#b8b4a0" />
<rect x="1260" y="982" width="1" height="1" fill="#fff" />
<rect x="1263" y="977" width="2" height="2" fill="#b8b4a0" />
<rect x="1264" y="978" width="1" height="1" fill="#fff" />
<rect x="1267" y="973" width="2" height="2" fill="#b8b4a0" />
<rect x="1268" y="974" width="1" height="1" fill="#fff" /><rect x="8" y="548" width="1247" height="421" fill="#fff" />
<path d="M476 549h628l3 3v351l-3 3h-628l-3-3v-351zM479 555v345h622v-345z" fill="#808080" fill-rule="evenodd"/>
<rect x="140.0" y="584.0" width="71" height="15" fill="#fff" stroke="#1a1ab8" stroke-width="2" />
<text x="142.5" y="595.5" font-size="10.5" fill="#000" class="k" >Differentiell</text>
<path d="M202 589h7l-3.5 4z" fill="#1a1ab8"/>
<polyline points="212,591.5 231.5,591.5 231.5,717" fill="none" stroke="#1a1ab8" stroke-width="1" shape-rendering="crispEdges"/>
<text x="113.5" y="613" font-size="10.5" fill="#000" class="k" textLength="68.5" lengthAdjust="spacingAndGlyphs" >minimum value</text>
<rect x="114.0" y="617.0" width="36" height="36" fill="#fff0b8" stroke="#ee7c14" stroke-width="2" />
<rect x="116.5" y="619.5" width="31" height="31" fill="#b2b2b2" stroke="#c88a52" stroke-width="1" />
<rect x="117" y="620" width="30" height="2" fill="#c8c8c8" />
<rect x="125.5" y="645.5" width="13" height="7" fill="#fff" stroke="#ee7c14" stroke-width="1" />
<text x="132.0" y="651.5" font-size="7" fill="#ee7c14" text-anchor="middle" font-family="'Liberation Sans',sans-serif" textLength="11" lengthAdjust="spacingAndGlyphs" >DBL</text>
<ellipse cx="123" cy="635" rx="4" ry="8.5" fill="#dcdcdc" stroke="#9a9a9a" stroke-width="0.8"/>
<path d="M120 635h6" stroke="#a0a0a0" stroke-width="0.8"/>
<rect x="128" y="630" width="17" height="9" fill="#fff" />
<text x="128.5" y="638" font-size="9.6" fill="#000" class="k" font-family="'Liberation Sans',sans-serif" textLength="15.5" lengthAdjust="spacingAndGlyphs" >1.23</text>
<path d="M145.5 630.5l4.5 4.5l-4.5 4.5z" fill="#fff" stroke="#000" stroke-width="1"/>
<polyline points="151,635.5 226.5,635.5 226.5,717" fill="none" stroke="#f09030" stroke-width="1" shape-rendering="crispEdges"/>
<text x="113.5" y="668" font-size="10.5" fill="#000" class="k" textLength="72.5" lengthAdjust="spacingAndGlyphs" >maximum value</text>
<rect x="114.0" y="672.0" width="36" height="36" fill="#fff0b8" stroke="#ee7c14" stroke-width="2" />
<rect x="116.5" y="674.5" width="31" height="31" fill="#b2b2b2" stroke="#c88a52" stroke-width="1" />
<rect x="117" y="675" width="30" height="2" fill="#c8c8c8" />
<rect x="125.5" y="700.5" width="13" height="7" fill="#fff" stroke="#ee7c14" stroke-width="1" />
<text x="132.0" y="706.5" font-size="7" fill="#ee7c14" text-anchor="middle" font-family="'Liberation Sans',sans-serif" textLength="11" lengthAdjust="spacingAndGlyphs" >DBL</text>
<ellipse cx="123" cy="690" rx="4" ry="8.5" fill="#dcdcdc" stroke="#9a9a9a" stroke-width="0.8"/>
<path d="M120 690h6" stroke="#a0a0a0" stroke-width="0.8"/>
<rect x="128" y="685" width="17" height="9" fill="#fff" />
<text x="128.5" y="693" font-size="9.6" fill="#000" class="k" font-family="'Liberation Sans',sans-serif" textLength="15.5" lengthAdjust="spacingAndGlyphs" >1.23</text>
<path d="M145.5 685.5l4.5 4.5l-4.5 4.5z" fill="#fff" stroke="#000" stroke-width="1"/>
<polyline points="151,690.5 219.5,690.5 219.5,717" fill="none" stroke="#f09030" stroke-width="1" shape-rendering="crispEdges"/>
<rect x="102.0" y="720.0" width="80" height="16" fill="#fff" stroke="#5e1a72" stroke-width="2" />
<text x="104" y="728" font-size="7" fill="#5e1a72" font-weight="bold" font-family="'Liberation Mono','DejaVu Sans Mono',monospace" >I</text>
<text x="107.5" y="733.5" font-size="7" fill="#5e1a72" font-weight="bold" font-family="'Liberation Mono','DejaVu Sans Mono',monospace" >0</text>
<path d="M105 733l6-10" stroke="#5e1a72" stroke-width="1"/>
<text x="113.5" y="732.5" font-size="10.5" fill="#000" class="k" >Dev1/ai0:1</text>
<rect x="169" y="721" width="1" height="14" fill="#5e1a72" />
<path d="M172.5 726h7l-3.5 4.5z" fill="#5e1a72"/>
<path d="M183 725.5H209" stroke="#860c8c" stroke-width="1" stroke-dasharray="3 1" shape-rendering="crispEdges"/>
<path d="M183 726.5H209" stroke="#860c8c" stroke-width="1" stroke-dasharray="3 1" stroke-dashoffset="2" shape-rendering="crispEdges"/>
<text x="237.5" y="583.5" font-size="10.5" fill="#000" class="k" >samples per channel</text>
<rect x="238.0" y="588.0" width="36" height="36" fill="#fff" stroke="#1a1ab8" stroke-width="2" />
<rect x="240.5" y="590.5" width="31" height="31" fill="#b2b2b2" stroke="#6464d4" stroke-width="1" />
<rect x="241" y="591" width="30" height="2" fill="#c8c8c8" />
<rect x="249.5" y="616.5" width="13" height="7" fill="#fff" stroke="#1a1ab8" stroke-width="1" />
<text x="256.0" y="622.5" font-size="7" fill="#1a1ab8" text-anchor="middle" font-family="'Liberation Sans',sans-serif" textLength="11" lengthAdjust="spacingAndGlyphs" >I32</text>
<ellipse cx="247" cy="606" rx="4" ry="8.5" fill="#dcdcdc" stroke="#9a9a9a" stroke-width="0.8"/>
<path d="M244 606h6" stroke="#a0a0a0" stroke-width="0.8"/>
<rect x="252" y="601" width="17" height="9" fill="#fff" />
<text x="252.5" y="609" font-size="9.6" fill="#000" class="k" font-family="'Liberation Sans',sans-serif" textLength="15.5" lengthAdjust="spacingAndGlyphs" >1.23</text>
<path d="M269.5 601.5l4.5 4.5l-4.5 4.5z" fill="#fff" stroke="#000" stroke-width="1"/>
<polyline points="275,606.5 325.5,606.5 325.5,717" fill="none" stroke="#1a1ab8" stroke-width="1" shape-rendering="crispEdges"/>
<rect x="237.0" y="629.0" width="79" height="15" fill="#fff" stroke="#1a1ab8" stroke-width="2" />
<text x="239.5" y="640.5" font-size="10.5" fill="#000" class="k" >Kontinuierlich</text>
<path d="M307 634h7l-3.5 4z" fill="#1a1ab8"/>
<polyline points="317,637.5 321.5,637.5 321.5,649.5 308.5,649.5 308.5,717" fill="none" stroke="#1a1ab8" stroke-width="1" shape-rendering="crispEdges"/>
<text x="238.5" y="659.5" font-size="10.5" fill="#000" class="k" >rate</text>
<rect x="239.0" y="664.0" width="36" height="36" fill="#fff0b8" stroke="#ee7c14" stroke-width="2" />
<rect x="241.5" y="666.5" width="31" height="31" fill="#b2b2b2" stroke="#c88a52" stroke-width="1" />
<rect x="242" y="667" width="30" height="2" fill="#c8c8c8" />
<rect x="250.5" y="692.5" width="13" height="7" fill="#fff" stroke="#ee7c14" stroke-width="1" />
<text x="257.0" y="698.5" font-size="7" fill="#ee7c14" text-anchor="middle" font-family="'Liberation Sans',sans-serif" textLength="11" lengthAdjust="spacingAndGlyphs" >DBL</text>
<ellipse cx="248" cy="682" rx="4" ry="8.5" fill="#dcdcdc" stroke="#9a9a9a" stroke-width="0.8"/>
<path d="M245 682h6" stroke="#a0a0a0" stroke-width="0.8"/>
<rect x="253" y="677" width="17" height="9" fill="#fff" />
<text x="253.5" y="685" font-size="9.6" fill="#000" class="k" font-family="'Liberation Sans',sans-serif" textLength="15.5" lengthAdjust="spacingAndGlyphs" >1.23</text>
<path d="M270.5 677.5l4.5 4.5l-4.5 4.5z" fill="#fff" stroke="#000" stroke-width="1"/>
<polyline points="276,682.5 302.5,682.5 302.5,717" fill="none" stroke="#f09030" stroke-width="1" shape-rendering="crispEdges"/>
<path d="M241 718.5H299" stroke="#860c8c" stroke-width="1" stroke-dasharray="3 1" shape-rendering="crispEdges"/>
<path d="M241 719.5H299" stroke="#860c8c" stroke-width="1" stroke-dasharray="3 1" stroke-dashoffset="2" shape-rendering="crispEdges"/>
<path d="M330 718.5H357" stroke="#860c8c" stroke-width="1" stroke-dasharray="3 1" shape-rendering="crispEdges"/>
<path d="M330 719.5H357" stroke="#860c8c" stroke-width="1" stroke-dasharray="3 1" stroke-dashoffset="2" shape-rendering="crispEdges"/>
<path d="M389 718.5H474" stroke="#860c8c" stroke-width="1" stroke-dasharray="3 1" shape-rendering="crispEdges"/>
<path d="M389 719.5H474" stroke="#860c8c" stroke-width="1" stroke-dasharray="3 1" stroke-dashoffset="2" shape-rendering="crispEdges"/>
<polyline points="241,745.5 299,745.5" fill="none" stroke="#a8a400" stroke-width="3" shape-rendering="crispEdges"/><polyline points="241,745.5 299,745.5" fill="none" stroke="#101000" stroke-width="1" shape-rendering="crispEdges"/><polyline points="241,745.5 299,745.5" fill="none" stroke="#f6f23c" stroke-width="1" stroke-dasharray="2 2" shape-rendering="crispEdges"/>
<polyline points="330,745.5 357,745.5" fill="none" stroke="#a8a400" stroke-width="3" shape-rendering="crispEdges"/><polyline points="330,745.5 357,745.5" fill="none" stroke="#101000" stroke-width="1" shape-rendering="crispEdges"/><polyline points="330,745.5 357,745.5" fill="none" stroke="#f6f23c" stroke-width="1" stroke-dasharray="2 2" shape-rendering="crispEdges"/>
<polyline points="389,745.5 474,745.5" fill="none" stroke="#a8a400" stroke-width="3" shape-rendering="crispEdges"/><polyline points="389,745.5 474,745.5" fill="none" stroke="#101000" stroke-width="1" shape-rendering="crispEdges"/><polyline points="389,745.5 474,745.5" fill="none" stroke="#f6f23c" stroke-width="1" stroke-dasharray="2 2" shape-rendering="crispEdges"/>
<path d="M482 718.5H563" stroke="#860c8c" stroke-width="1" stroke-dasharray="3 1" shape-rendering="crispEdges"/>
<path d="M482 719.5H563" stroke="#860c8c" stroke-width="1" stroke-dasharray="3 1" stroke-dashoffset="2" shape-rendering="crispEdges"/>
<path d="M595 718.5H1099" stroke="#860c8c" stroke-width="1" stroke-dasharray="3 1" shape-rendering="crispEdges"/>
<path d="M595 719.5H1099" stroke="#860c8c" stroke-width="1" stroke-dasharray="3 1" stroke-dashoffset="2" shape-rendering="crispEdges"/>
<polyline points="482,745.5 563,745.5" fill="none" stroke="#a8a400" stroke-width="3" shape-rendering="crispEdges"/><polyline points="482,745.5 563,745.5" fill="none" stroke="#101000" stroke-width="1" shape-rendering="crispEdges"/><polyline points="482,745.5 563,745.5" fill="none" stroke="#f6f23c" stroke-width="1" stroke-dasharray="2 2" shape-rendering="crispEdges"/>
<polyline points="595,745.5 1099,745.5" fill="none" stroke="#a8a400" stroke-width="3" shape-rendering="crispEdges"/><polyline points="595,745.5 1099,745.5" fill="none" stroke="#101000" stroke-width="1" shape-rendering="crispEdges"/><polyline points="595,745.5 1099,745.5" fill="none" stroke="#f6f23c" stroke-width="1" stroke-dasharray="2 2" shape-rendering="crispEdges"/>
<polyline points="1139,745.5 1147,745.5" fill="none" stroke="#a8a400" stroke-width="3" shape-rendering="crispEdges"/><polyline points="1139,745.5 1147,745.5" fill="none" stroke="#101000" stroke-width="1" shape-rendering="crispEdges"/><polyline points="1139,745.5 1147,745.5" fill="none" stroke="#f6f23c" stroke-width="1" stroke-dasharray="2 2" shape-rendering="crispEdges"/>
<path d="M151 928.5H171" stroke="#860c8c" stroke-width="1" stroke-dasharray="3 1" shape-rendering="crispEdges"/>
<path d="M151 929.5H171" stroke="#860c8c" stroke-width="1" stroke-dasharray="3 1" stroke-dashoffset="2" shape-rendering="crispEdges"/>
<path d="M202 915.5H296" stroke="#860c8c" stroke-width="1" stroke-dasharray="3 1" shape-rendering="crispEdges"/>
<path d="M202 916.5H296" stroke="#860c8c" stroke-width="1" stroke-dasharray="3 1" stroke-dashoffset="2" shape-rendering="crispEdges"/>
<path d="M327 916.5H349" stroke="#860c8c" stroke-width="1" stroke-dasharray="3 1" shape-rendering="crispEdges"/>
<path d="M327 917.5H349" stroke="#860c8c" stroke-width="1" stroke-dasharray="3 1" stroke-dashoffset="2" shape-rendering="crispEdges"/>
<polyline points="202,941.5 296,941.5" fill="none" stroke="#a8a400" stroke-width="3" shape-rendering="crispEdges"/><polyline points="202,941.5 296,941.5" fill="none" stroke="#101000" stroke-width="1" shape-rendering="crispEdges"/><polyline points="202,941.5 296,941.5" fill="none" stroke="#f6f23c" stroke-width="1" stroke-dasharray="2 2" shape-rendering="crispEdges"/>
<polyline points="327,942 349,942" fill="none" stroke="#a8a400" stroke-width="3" shape-rendering="crispEdges"/><polyline points="327,942 349,942" fill="none" stroke="#101000" stroke-width="1" shape-rendering="crispEdges"/><polyline points="327,942 349,942" fill="none" stroke="#f6f23c" stroke-width="1" stroke-dasharray="2 2" shape-rendering="crispEdges"/>
<path d="M381 916.5H387" stroke="#860c8c" stroke-width="1" stroke-dasharray="3 1" shape-rendering="crispEdges"/>
<path d="M381 917.5H387" stroke="#860c8c" stroke-width="1" stroke-dasharray="3 1" stroke-dashoffset="2" shape-rendering="crispEdges"/>
<path d="M386.5 802V917" stroke="#860c8c" stroke-width="1" stroke-dasharray="3 1" shape-rendering="crispEdges"/>
<path d="M387.5 802V917" stroke="#860c8c" stroke-width="1" stroke-dasharray="3 1" stroke-dashoffset="2" shape-rendering="crispEdges"/>
<path d="M387 801.5H474" stroke="#860c8c" stroke-width="1" stroke-dasharray="3 1" shape-rendering="crispEdges"/>
<path d="M387 802.5H474" stroke="#860c8c" stroke-width="1" stroke-dasharray="3 1" stroke-dashoffset="2" shape-rendering="crispEdges"/>
<polyline points="381,942 427.5,942 427.5,827.5 474,827.5" fill="none" stroke="#a8a400" stroke-width="3" shape-rendering="crispEdges"/><polyline points="381,942 427.5,942 427.5,827.5 474,827.5" fill="none" stroke="#101000" stroke-width="1" shape-rendering="crispEdges"/><polyline points="381,942 427.5,942 427.5,827.5 474,827.5" fill="none" stroke="#f6f23c" stroke-width="1" stroke-dasharray="2 2" shape-rendering="crispEdges"/>
<path d="M482 801.5H808" stroke="#860c8c" stroke-width="1" stroke-dasharray="3 1" shape-rendering="crispEdges"/>
<path d="M482 802.5H808" stroke="#860c8c" stroke-width="1" stroke-dasharray="3 1" stroke-dashoffset="2" shape-rendering="crispEdges"/>
<path d="M840 801.5H1099" stroke="#860c8c" stroke-width="1" stroke-dasharray="3 1" shape-rendering="crispEdges"/>
<path d="M840 802.5H1099" stroke="#860c8c" stroke-width="1" stroke-dasharray="3 1" stroke-dashoffset="2" shape-rendering="crispEdges"/>
<polyline points="482,827.5 808,827.5" fill="none" stroke="#a8a400" stroke-width="3" shape-rendering="crispEdges"/><polyline points="482,827.5 808,827.5" fill="none" stroke="#101000" stroke-width="1" shape-rendering="crispEdges"/><polyline points="482,827.5 808,827.5" fill="none" stroke="#f6f23c" stroke-width="1" stroke-dasharray="2 2" shape-rendering="crispEdges"/>
<polyline points="840,827.5 1099,827.5" fill="none" stroke="#a8a400" stroke-width="3" shape-rendering="crispEdges"/><polyline points="840,827.5 1099,827.5" fill="none" stroke="#101000" stroke-width="1" shape-rendering="crispEdges"/><polyline points="840,827.5 1099,827.5" fill="none" stroke="#f6f23c" stroke-width="1" stroke-dasharray="2 2" shape-rendering="crispEdges"/>
<polyline points="1139,827.5 1148,827.5" fill="none" stroke="#a8a400" stroke-width="3" shape-rendering="crispEdges"/><polyline points="1139,827.5 1148,827.5" fill="none" stroke="#101000" stroke-width="1" shape-rendering="crispEdges"/><polyline points="1139,827.5 1148,827.5" fill="none" stroke="#f6f23c" stroke-width="1" stroke-dasharray="2 2" shape-rendering="crispEdges"/>
<rect x="709.5" y="716.5" width="8.0" height="5.0" fill="#fff" />
<rect x="709.5" y="743.0" width="8.0" height="5.0" fill="#fff" />
<rect x="709.5" y="799.5" width="8.0" height="5.0" fill="#fff" />
<rect x="538.5" y="716.5" width="8.0" height="5.0" fill="#fff" />
<rect x="597.5" y="716.5" width="8.0" height="5.0" fill="#fff" />
<polyline points="594,726.5 601.5,726.5 601.5,668.5" fill="none" stroke="#c8621c" stroke-width="5" shape-rendering="crispEdges" stroke-linejoin="miter"/><polyline points="594,726.5 601.5,726.5 601.5,668.5" fill="none" stroke="url(#hatch)" stroke-width="3"/>
<polyline points="568,638.5 549.5,638.5 549.5,668.5 689.5,668.5" fill="none" stroke="#c8621c" stroke-width="5" shape-rendering="crispEdges" stroke-linejoin="miter"/><polyline points="568,638.5 549.5,638.5 549.5,668.5 689.5,668.5" fill="none" stroke="url(#hatch)" stroke-width="3"/>
<polyline points="616.5,668.5 616.5,624.5 689.5,624.5" fill="none" stroke="#c8621c" stroke-width="5" shape-rendering="crispEdges" stroke-linejoin="miter"/><polyline points="616.5,668.5 616.5,624.5 689.5,624.5" fill="none" stroke="url(#hatch)" stroke-width="3"/>
<circle cx="601.5" cy="668.5" r="3.2" fill="#f4b27a" stroke="#cf6a1c" stroke-width="1"/><circle cx="616.5" cy="668.5" r="3.2" fill="#f4b27a" stroke="#cf6a1c" stroke-width="1"/>
<polyline points="721,637.5 788.5,637.5 788.5,605.5 809,605.5" fill="none" stroke="#b4561a" stroke-width="3" shape-rendering="crispEdges"/><polyline points="721,637.5 788.5,637.5 788.5,605.5 809,605.5" fill="none" stroke="#e89858" stroke-width="1.2" shape-rendering="crispEdges"/><polyline points="721,637.5 788.5,637.5 788.5,605.5 809,605.5" fill="none" stroke="#fff" stroke-width="1.2" stroke-dasharray="4 2" shape-rendering="crispEdges"/>
<polyline points="721,682.5 765.5,682.5 765.5,660.5 809,660.5" fill="none" stroke="#b4561a" stroke-width="3" shape-rendering="crispEdges"/><polyline points="721,682.5 765.5,682.5 765.5,660.5 809,660.5" fill="none" stroke="#e89858" stroke-width="1.2" shape-rendering="crispEdges"/><polyline points="721,682.5 765.5,682.5 765.5,660.5 809,660.5" fill="none" stroke="#fff" stroke-width="1.2" stroke-dasharray="4 2" shape-rendering="crispEdges"/>
<polyline points="713.5,687 713.5,814.5 808.5,814.5" fill="none" stroke="#b4561a" stroke-width="3" shape-rendering="crispEdges"/><polyline points="713.5,687 713.5,814.5 808.5,814.5" fill="none" stroke="#e89858" stroke-width="1.2" shape-rendering="crispEdges"/><polyline points="713.5,687 713.5,814.5 808.5,814.5" fill="none" stroke="#fff" stroke-width="1.2" stroke-dasharray="4 2" shape-rendering="crispEdges"/>
<polyline points="842,589.5 852,589.5" fill="none" stroke="#f09030" stroke-width="2" shape-rendering="crispEdges"/>
<polyline points="842,644.5 852,644.5" fill="none" stroke="#f09030" stroke-width="2" shape-rendering="crispEdges"/>
<rect x="209.5" y="717.5" width="31" height="30" fill="#fff" stroke="#000" stroke-width="1" />
<rect x="210" y="718" width="30" height="8" fill="#8e1414" />
<text x="225" y="725" font-size="8" fill="#fff" text-anchor="middle" font-weight="bold" font-family="'Liberation Mono','DejaVu Sans Mono',monospace" textLength="27" lengthAdjust="spacingAndGlyphs" >DAQmx</text>
<path d="M216 729v8M212 733h8M213 730l6 6M219 730l-6 6" stroke="#d8c000" stroke-width="1"/>
<circle cx="216" cy="733" r="1.2" fill="#000"/>
<path d="M223 737.5h14M223 737.5l3-2.5v5zM237 737.5l-3-2.5v5z" stroke="#1020a0" stroke-width="1" fill="#1020a0"/>
<path d="M222 746v-4h3v4h3v-4h3v4h3v-4h3v4" fill="none" stroke="#1020a0" stroke-width="1"/>
<rect x="298.5" y="717.5" width="31" height="30" fill="#fff" stroke="#000" stroke-width="1" />
<rect x="299" y="718" width="30" height="8" fill="#8e1414" />
<text x="314" y="725" font-size="8" fill="#fff" text-anchor="middle" font-weight="bold" font-family="'Liberation Mono','DejaVu Sans Mono',monospace" textLength="27" lengthAdjust="spacingAndGlyphs" >DAQmx</text>
<circle cx="314" cy="737" r="8.5" fill="#2868c8" stroke="#103070" stroke-width="1"/>
<path d="M306 730l3 2M322 730l-3 2" stroke="#000" stroke-width="2.2"/>
<rect x="307.5" y="734.5" width="13" height="6" fill="#e8e8e8" stroke="#000" stroke-width="1" />
<path d="M309 737.5h10" stroke="#000" stroke-width="1.5" stroke-dasharray="2 1"/>
<rect x="357.5" y="717.5" width="31" height="30" fill="#fff" stroke="#000" stroke-width="1" />
<rect x="358" y="718" width="30" height="8" fill="#8e1414" />
<text x="373" y="725" font-size="8" fill="#fff" text-anchor="middle" font-weight="bold" font-family="'Liberation Mono','DejaVu Sans Mono',monospace" textLength="27" lengthAdjust="spacingAndGlyphs" >DAQmx</text>
<path d="M360 728l9 5l-9 5z" fill="#10c030"/>
<path d="M372 735.5h-1.5v4.5h-2h2v4.5h1.5" fill="none" stroke="#000" stroke-width="1"/>
<path d="M374 736.5q1.5-3 3 0t3 0t3 0t2 0" fill="none" stroke="#109030" stroke-width="0.9"/><path d="M374 741h1.5v-2.5h2v2.5h1.5v-2.5h2v2.5h1.5v-2.5h2" fill="none" stroke="#101890" stroke-width="1"/><path d="M374 745l1.4-2l1.4 2l1.4-2l1.4 2l1.4-2l1.4 2l1.4-2" fill="none" stroke="#e02020" stroke-width="0.8"/>
<rect x="183.5" y="752.5" width="86" height="15" fill="#fff" stroke="#8a1f8a" stroke-width="1" />
<rect x="181.5" y="749.5" width="86" height="15" fill="#fff" stroke="#8a1f8a" stroke-width="1" />
<rect x="182.5" y="750.5" width="84" height="13" fill="none" stroke="#e6cfe6" stroke-width="1" />
<text x="183.5" y="761" font-size="10.5" fill="#000" class="k" >AI - Spannung</text>
<path d="M258 755h7l-3.5 4z" fill="#8a1f8a"/>
<rect x="277.5" y="753.5" width="76" height="15" fill="#fff" stroke="#8a1f8a" stroke-width="1" />
<rect x="275.5" y="750.5" width="76" height="15" fill="#fff" stroke="#8a1f8a" stroke-width="1" />
<rect x="276.5" y="751.5" width="74" height="13" fill="none" stroke="#e6cfe6" stroke-width="1" />
<text x="277.5" y="762" font-size="10.5" fill="#000" class="k" >Sample-Takt</text>
<path d="M342 756h7l-3.5 4z" fill="#8a1f8a"/>
<rect x="473.5" y="716.5" width="8" height="8" fill="#902090" stroke="#000" stroke-width="1" />
<rect x="473.5" y="741.5" width="8" height="8" fill="#8c8c1c" stroke="#000" stroke-width="1" />
<rect x="1098.5" y="715.5" width="8" height="8" fill="#902090" stroke="#000" stroke-width="1" />
<rect x="1098.5" y="740.5" width="8" height="8" fill="#8c8c1c" stroke="#000" stroke-width="1" />
<text x="491" y="590.5" font-size="10.5" fill="#000" class="k" >number of samples per channel</text>
<rect x="492.0" y="595.0" width="36" height="36" fill="#fff" stroke="#1a1ab8" stroke-width="2" />
<rect x="494.5" y="597.5" width="31" height="31" fill="#b2b2b2" stroke="#6464d4" stroke-width="1" />
<rect x="495" y="598" width="30" height="2" fill="#c8c8c8" />
<rect x="503.5" y="623.5" width="13" height="7" fill="#fff" stroke="#1a1ab8" stroke-width="1" />
<text x="510.0" y="629.5" font-size="7" fill="#1a1ab8" text-anchor="middle" font-family="'Liberation Sans',sans-serif" textLength="11" lengthAdjust="spacingAndGlyphs" >I32</text>
<ellipse cx="501" cy="613" rx="4" ry="8.5" fill="#dcdcdc" stroke="#9a9a9a" stroke-width="0.8"/>
<path d="M498 613h6" stroke="#a0a0a0" stroke-width="0.8"/>
<rect x="506" y="608" width="17" height="9" fill="#fff" />
<text x="506.5" y="616" font-size="9.6" fill="#000" class="k" font-family="'Liberation Sans',sans-serif" textLength="15.5" lengthAdjust="spacingAndGlyphs" >1.23</text>
<path d="M523.5 608.5l4.5 4.5l-4.5 4.5z" fill="#fff" stroke="#000" stroke-width="1"/>
<polyline points="529,613.5 542.5,613.5 542.5,732.5 563,732.5" fill="none" stroke="#1a1ab8" stroke-width="1" shape-rendering="crispEdges"/>
<text x="568.5" y="615.5" font-size="10.5" fill="#000" class="k" >Signalverlaufsgraph</text>
<rect x="568.75" y="619.75" width="36.5" height="36.5" fill="#f4e6dc" stroke="#c08868" stroke-width="1.5" />
<rect x="571.5" y="622.5" width="31" height="31" fill="#b4b0ac" stroke="#c08868" stroke-width="1" />
<rect x="572" y="623" width="30" height="2" fill="#d0ccc8" />
<rect x="578" y="624" width="20" height="19" fill="#0c1c1c" />
<path d="M582.5 624v19M587.5 624v19M592.5 624v19M578 628.5h20M578 633.5h20M578 638.5h20" stroke="#3c6c6c" stroke-width="1"/>
<path d="M579 634.5h4l2.5-6.5l3.5 10l2.5-4l2 2.5l3-1.5" fill="none" stroke="#fff" stroke-width="1.1"/>
<text x="574" y="629.5" font-size="5.5" fill="#000" font-weight="bold" font-family="'Liberation Sans',sans-serif" >2</text><text x="574" y="636.5" font-size="5.5" fill="#000" font-weight="bold" font-family="'Liberation Sans',sans-serif" >1</text><text x="574" y="643.5" font-size="5.5" fill="#000" font-weight="bold" font-family="'Liberation Sans',sans-serif" >0</text>
<text x="578" y="648.5" font-size="5.5" fill="#000" font-weight="bold" font-family="'Liberation Sans',sans-serif" >0.0</text><text x="590" y="648.5" font-size="5.5" fill="#000" font-weight="bold" font-family="'Liberation Sans',sans-serif" >1.0</text>
<rect x="580" y="648" width="15" height="7" fill="#fff" />
<path d="M582 652q1.5-3 3 0t3 0t3 0t2-1" fill="none" stroke="#603018" stroke-width="0.9"/>
<path d="M570.5 633.5l4.5 4.5l-4.5 4.5z" fill="#fff" stroke="#000" stroke-width="1"/>
<rect x="563.5" y="716.5" width="31" height="30" fill="#fff" stroke="#000" stroke-width="1" />
<rect x="564" y="717" width="30" height="8" fill="#8e1414" />
<text x="579" y="724" font-size="8" fill="#fff" text-anchor="middle" font-weight="bold" font-family="'Liberation Mono','DejaVu Sans Mono',monospace" textLength="27" lengthAdjust="spacingAndGlyphs" >DAQmx</text>
<circle cx="574.5" cy="731.5" r="3" fill="#b8e8f0" stroke="#000" stroke-width="1.2"/><circle cx="583.5" cy="731.5" r="3" fill="#b8e8f0" stroke="#000" stroke-width="1.2"/>
<path d="M577.5 731h3M571.5 730l-1-2.5M586.5 730l1-2.5" stroke="#000" stroke-width="1.1" fill="none"/>
<path d="M566 744h5v-6h6v6h5v-6h6v6h4" fill="none" stroke="#000" stroke-width="1.1"/><path d="M566 739q4-3 8 1.5t8 1.5t8-3t3-1" fill="none" stroke="#e01818" stroke-width="1.6"/>
<rect x="527.5" y="752.5" width="105" height="28" fill="#fff" stroke="#8a1f8a" stroke-width="1" />
<rect x="525.5" y="749.5" width="105" height="28" fill="#fff" stroke="#8a1f8a" stroke-width="1" />
<rect x="526.5" y="750.5" width="103" height="26" fill="none" stroke="#e6cfe6" stroke-width="1" />
<text x="571.5" y="761" font-size="10.5" fill="#000" class="k" text-anchor="middle" >Analog 1D Sig</text>
<text x="571.5" y="773.5" font-size="10.5" fill="#000" class="k" text-anchor="middle" >NKanäle NSamples</text>
<path d="M621 761.5h7l-3.5 4z" fill="#8a1f8a"/>
<polyline points="680,637.5 690,637.5" fill="none" stroke="#1a1ab8" stroke-width="1" shape-rendering="crispEdges"/>
<polyline points="682,683.5 690,683.5" fill="none" stroke="#1a1ab8" stroke-width="1" shape-rendering="crispEdges"/>
<rect x="689.5" y="615.5" width="31" height="26" fill="#ffffc8" stroke="#000" stroke-width="1" />
<rect x="695.4" y="620.4" width="8.2" height="12.2" fill="#ffffc8" stroke="#000" stroke-width="0.8" />
<rect x="693.45" y="618.45" width="8.1" height="12.1" fill="#fff" stroke="#000" stroke-width="0.9" />
<path d="M696 618v13M699 618v13M693 622.3h9M693 626.6h9" stroke="#000" stroke-width="0.8"/>
<rect x="692.5" y="636" width="3" height="2.5" fill="#000" />
<path d="M697 637.5h2M699.5 635v4M698 636l1.5-1.5l1.5 1.5" stroke="#000" stroke-width="0.9" fill="none"/>
<rect x="709.95" y="634.95" width="3.6" height="3.6" fill="#fff" stroke="#000" stroke-width="0.9" />
<rect x="668.0" y="630.0" width="11" height="14" fill="#fff" stroke="#1a1ab8" stroke-width="2" />
<text x="673.5" y="641" font-size="10.5" fill="#000" class="k" text-anchor="middle" >1</text>
<rect x="689.5" y="660.5" width="31" height="26" fill="#ffffc8" stroke="#000" stroke-width="1" />
<rect x="695.4" y="665.4" width="8.2" height="12.2" fill="#ffffc8" stroke="#000" stroke-width="0.8" />
<rect x="693.45" y="663.45" width="8.1" height="12.1" fill="#fff" stroke="#000" stroke-width="0.9" />
<path d="M696 663v13M699 663v13M693 667.3h9M693 671.6h9" stroke="#000" stroke-width="0.8"/>
<rect x="692.5" y="681" width="3" height="2.5" fill="#000" />
<path d="M697 682.5h2M699.5 680v4M698 681l1.5-1.5l1.5 1.5" stroke="#000" stroke-width="0.9" fill="none"/>
<rect x="709.95" y="679.95" width="3.6" height="3.6" fill="#fff" stroke="#000" stroke-width="0.9" />
<rect x="670.0" y="676.0" width="11" height="14" fill="#fff" stroke="#1a1ab8" stroke-width="2" />
<text x="675.5" y="687" font-size="10.5" fill="#000" class="k" text-anchor="middle" >0</text>
<rect x="809.5" y="582.5" width="32" height="44" fill="#ffffc8" stroke="#000" stroke-width="1" />
<rect x="825.5" y="582.5" width="16" height="14" fill="#fff" stroke="#000" stroke-width="1" />
<text x="833.5" y="593.5" font-size="10" fill="#f09030" text-anchor="middle" >Y</text>
<rect x="825.5" y="597.5" width="16" height="14" fill="#fff" stroke="#000" stroke-width="1" />
<text x="833.5" y="608.5" font-size="10" fill="#c87830" text-anchor="middle" >dt</text>
<rect x="825.5" y="612.5" width="16" height="14" fill="#fff" stroke="#000" stroke-width="1" />
<text x="833.5" y="623.5" font-size="10" fill="#702020" text-anchor="middle" >t0</text>
<path d="M811 604.5q1.5-5 3.5 0t3.5 0t3.5 0" fill="none" stroke="#000" stroke-width="1"/>
<rect x="809.5" y="637.5" width="32" height="44" fill="#ffffc8" stroke="#000" stroke-width="1" />
<rect x="825.5" y="637.5" width="16" height="14" fill="#fff" stroke="#000" stroke-width="1" />
<text x="833.5" y="648.5" font-size="10" fill="#f09030" text-anchor="middle" >Y</text>
<rect x="825.5" y="652.5" width="16" height="14" fill="#fff" stroke="#000" stroke-width="1" />
<text x="833.5" y="663.5" font-size="10" fill="#c87830" text-anchor="middle" >dt</text>
<rect x="825.5" y="667.5" width="16" height="14" fill="#fff" stroke="#000" stroke-width="1" />
<text x="833.5" y="678.5" font-size="10" fill="#702020" text-anchor="middle" >t0</text>
<path d="M811 659.5q1.5-5 3.5 0t3.5 0t3.5 0" fill="none" stroke="#000" stroke-width="1"/>
<text x="850.5" y="566" font-size="10.5" fill="#000" class="k" >Amplitude Loop</text>
<rect x="850.75" y="570.75" width="36.5" height="36.5" fill="#fbe3c4" stroke="#f09030" stroke-width="1.5" />
<rect x="853.5" y="573.5" width="31" height="31" fill="#aaaaaa" stroke="#f09030" stroke-width="1" />
<rect x="855.5" y="575.5" width="8" height="8" fill="#d6d6d6" stroke="#000" stroke-width="1" />
<text x="859.5" y="582.3" font-size="7.5" fill="#000" text-anchor="middle" font-weight="bold" font-family="'Liberation Sans',sans-serif" >i</text>
<rect x="855.5" y="583.5" width="8" height="8" fill="#d6d6d6" stroke="#000" stroke-width="1" />
<text x="859.5" y="590.3" font-size="7.5" fill="#000" text-anchor="middle" font-weight="bold" font-family="'Liberation Sans',sans-serif" >j</text>
<rect x="855.5" y="591.5" width="8" height="8" fill="#d6d6d6" stroke="#000" stroke-width="1" />
<text x="859.5" y="598.3" font-size="7.5" fill="#000" text-anchor="middle" font-weight="bold" font-family="'Liberation Sans',sans-serif" >k</text>
<rect x="865" y="575" width="19" height="9" fill="#cccccc" />
<rect x="865" y="583" width="19" height="1" fill="#e4e4e4" />
<text x="874.5" y="582" font-size="7.5" fill="#000" text-anchor="middle" font-weight="bold" font-family="'Liberation Mono','DejaVu Sans Mono',monospace" >123</text>
<rect x="862.5" y="599.5" width="14" height="6" fill="#fff" stroke="#f09030" stroke-width="1" />
<text x="869.5" y="605" font-size="7" fill="#f09030" text-anchor="middle" font-family="'Liberation Sans',sans-serif" textLength="11" lengthAdjust="spacingAndGlyphs" >DBL</text>
<path d="M852.5 585.5l4 4l-4 4z" fill="#fff" stroke="#000" stroke-width="1"/>
<text x="850.5" y="621" font-size="10.5" fill="#000" class="k" >Amplitude Quelle</text>
<rect x="850.75" y="625.75" width="36.5" height="36.5" fill="#fbe3c4" stroke="#f09030" stroke-width="1.5" />
<rect x="853.5" y="628.5" width="31" height="31" fill="#aaaaaa" stroke="#f09030" stroke-width="1" />
<rect x="855.5" y="630.5" width="8" height="8" fill="#d6d6d6" stroke="#000" stroke-width="1" />
<text x="859.5" y="637.3" font-size="7.5" fill="#000" text-anchor="middle" font-weight="bold" font-family="'Liberation Sans',sans-serif" >i</text>
<rect x="855.5" y="638.5" width="8" height="8" fill="#d6d6d6" stroke="#000" stroke-width="1" />
<text x="859.5" y="645.3" font-size="7.5" fill="#000" text-anchor="middle" font-weight="bold" font-family="'Liberation Sans',sans-serif" >j</text>
<rect x="855.5" y="646.5" width="8" height="8" fill="#d6d6d6" stroke="#000" stroke-width="1" />
<text x="859.5" y="653.3" font-size="7.5" fill="#000" text-anchor="middle" font-weight="bold" font-family="'Liberation Sans',sans-serif" >k</text>
<rect x="865" y="630" width="19" height="9" fill="#cccccc" />
<rect x="865" y="638" width="19" height="1" fill="#e4e4e4" />
<text x="874.5" y="637" font-size="7.5" fill="#000" text-anchor="middle" font-weight="bold" font-family="'Liberation Mono','DejaVu Sans Mono',monospace" >123</text>
<rect x="862.5" y="654.5" width="14" height="6" fill="#fff" stroke="#f09030" stroke-width="1" />
<text x="869.5" y="660" font-size="7" fill="#f09030" text-anchor="middle" font-family="'Liberation Sans',sans-serif" textLength="11" lengthAdjust="spacingAndGlyphs" >DBL</text>
<path d="M852.5 640.5l4 4l-4 4z" fill="#fff" stroke="#000" stroke-width="1"/>
<rect x="1107.5" y="717.5" width="31" height="30" fill="#fff" stroke="#000" stroke-width="1" />
<rect x="1108" y="718" width="30" height="8" fill="#8e1414" />
<text x="1123" y="725" font-size="8" fill="#fff" text-anchor="middle" font-weight="bold" font-family="'Liberation Mono','DejaVu Sans Mono',monospace" textLength="27" lengthAdjust="spacingAndGlyphs" >DAQmx</text>
<path d="M1123.5 734.5l4-4l4 4l-4 4z" fill="#e02020" stroke="#701010" stroke-width="0.7"/>
<path d="M1127.5 730.5l4-4l4 4l-4 4z" fill="#f4e040" stroke="#806010" stroke-width="0.7"/>
<path d="M1114 735.5h-1.5v4.5h-2h2v4.5h1.5" fill="none" stroke="#000" stroke-width="1"/>
<path d="M1115 737.5q1.5-3 3 0t3 0t3 0t2 0" fill="none" stroke="#109030" stroke-width="0.9"/><path d="M1115 742h1.5v-2.5h2v2.5h1.5v-2.5h2v2.5h1.5v-2.5h2" fill="none" stroke="#101890" stroke-width="1"/><path d="M1115 746l1.4-2l1.4 2l1.4-2l1.4 2l1.4-2l1.4 2l1.4-2" fill="none" stroke="#e02020" stroke-width="0.8"/>
<rect x="1147.5" y="716.5" width="31" height="31" fill="#fff" stroke="#000" stroke-width="1" />
<path d="M1151 721q12-6 24 0q4 8-2 16q-6 3-12 3l-6 5l1-5q-6-2-5-10q-1-5 0-9z" fill="#fff" stroke="#000" stroke-width="1"/>
<text x="1163" y="729" font-size="8" fill="#000" text-anchor="middle" font-weight="bold" font-family="'Liberation Mono','DejaVu Sans Mono',monospace" textLength="23" lengthAdjust="spacingAndGlyphs" >Error</text>
<text x="1163" y="739" font-size="10" fill="#000" text-anchor="middle" font-weight="bold" font-family="'Liberation Sans',sans-serif" >?!</text>
<text x="102.5" y="810" font-size="10.5" fill="#000" class="k" textLength="77.5" lengthAdjust="spacingAndGlyphs" >minimum value 2</text>
<rect x="103.0" y="814.0" width="36" height="36" fill="#fff0b8" stroke="#ee7c14" stroke-width="2" />
<rect x="105.5" y="816.5" width="31" height="31" fill="#b2b2b2" stroke="#c88a52" stroke-width="1" />
<rect x="106" y="817" width="30" height="2" fill="#c8c8c8" />
<rect x="114.5" y="842.5" width="13" height="7" fill="#fff" stroke="#ee7c14" stroke-width="1" />
<text x="121.0" y="848.5" font-size="7" fill="#ee7c14" text-anchor="middle" font-family="'Liberation Sans',sans-serif" textLength="11" lengthAdjust="spacingAndGlyphs" >DBL</text>
<ellipse cx="112" cy="832" rx="4" ry="8.5" fill="#dcdcdc" stroke="#9a9a9a" stroke-width="0.8"/>
<path d="M109 832h6" stroke="#a0a0a0" stroke-width="0.8"/>
<rect x="117" y="827" width="17" height="9" fill="#fff" />
<text x="117.5" y="835" font-size="9.6" fill="#000" class="k" font-family="'Liberation Sans',sans-serif" textLength="15.5" lengthAdjust="spacingAndGlyphs" >1.23</text>
<path d="M134.5 827.5l4.5 4.5l-4.5 4.5z" fill="#fff" stroke="#000" stroke-width="1"/>
<polyline points="140,832.5 187.5,832.5 187.5,913" fill="none" stroke="#f09030" stroke-width="1" shape-rendering="crispEdges"/>
<text x="102.5" y="870" font-size="10.5" fill="#000" class="k" textLength="81.5" lengthAdjust="spacingAndGlyphs" >maximum value 2</text>
<rect x="103.0" y="874.0" width="36" height="36" fill="#fff0b8" stroke="#ee7c14" stroke-width="2" />
<rect x="105.5" y="876.5" width="31" height="31" fill="#b2b2b2" stroke="#c88a52" stroke-width="1" />
<rect x="106" y="877" width="30" height="2" fill="#c8c8c8" />
<rect x="114.5" y="902.5" width="13" height="7" fill="#fff" stroke="#ee7c14" stroke-width="1" />
<text x="121.0" y="908.5" font-size="7" fill="#ee7c14" text-anchor="middle" font-family="'Liberation Sans',sans-serif" textLength="11" lengthAdjust="spacingAndGlyphs" >DBL</text>
<ellipse cx="112" cy="892" rx="4" ry="8.5" fill="#dcdcdc" stroke="#9a9a9a" stroke-width="0.8"/>
<path d="M109 892h6" stroke="#a0a0a0" stroke-width="0.8"/>
<rect x="117" y="887" width="17" height="9" fill="#fff" />
<text x="117.5" y="895" font-size="9.6" fill="#000" class="k" font-family="'Liberation Sans',sans-serif" textLength="15.5" lengthAdjust="spacingAndGlyphs" >1.23</text>
<path d="M134.5 887.5l4.5 4.5l-4.5 4.5z" fill="#fff" stroke="#000" stroke-width="1"/>
<polyline points="140,892.5 181.5,892.5 181.5,913" fill="none" stroke="#f09030" stroke-width="1" shape-rendering="crispEdges"/>
<rect x="76.0" y="921.0" width="74" height="16" fill="#fff" stroke="#5e1a72" stroke-width="2" />
<text x="78" y="929" font-size="7" fill="#5e1a72" font-weight="bold" font-family="'Liberation Mono','DejaVu Sans Mono',monospace" >I</text>
<text x="81.5" y="934.5" font-size="7" fill="#5e1a72" font-weight="bold" font-family="'Liberation Mono','DejaVu Sans Mono',monospace" >0</text>
<path d="M79 934l6-10" stroke="#5e1a72" stroke-width="1"/>
<text x="87.5" y="933.5" font-size="10.5" fill="#000" class="k" >Dev1/ao0</text>
<rect x="137" y="922" width="1" height="14" fill="#5e1a72" />
<path d="M140.5 927h7l-3.5 4.5z" fill="#5e1a72"/>
<text x="219.5" y="796" font-size="10.5" fill="#000" class="k" >samples per channel 2</text>
<rect x="220.0" y="801.0" width="36" height="36" fill="#fff" stroke="#1a1ab8" stroke-width="2" />
<rect x="222.5" y="803.5" width="31" height="31" fill="#b2b2b2" stroke="#6464d4" stroke-width="1" />
<rect x="223" y="804" width="30" height="2" fill="#c8c8c8" />
<rect x="231.5" y="829.5" width="13" height="7" fill="#fff" stroke="#1a1ab8" stroke-width="1" />
<text x="238.0" y="835.5" font-size="7" fill="#1a1ab8" text-anchor="middle" font-family="'Liberation Sans',sans-serif" textLength="11" lengthAdjust="spacingAndGlyphs" >I32</text>
<ellipse cx="229" cy="819" rx="4" ry="8.5" fill="#dcdcdc" stroke="#9a9a9a" stroke-width="0.8"/>
<path d="M226 819h6" stroke="#a0a0a0" stroke-width="0.8"/>
<rect x="234" y="814" width="17" height="9" fill="#fff" />
<text x="234.5" y="822" font-size="9.6" fill="#000" class="k" font-family="'Liberation Sans',sans-serif" textLength="15.5" lengthAdjust="spacingAndGlyphs" >1.23</text>
<path d="M251.5 814.5l4.5 4.5l-4.5 4.5z" fill="#fff" stroke="#000" stroke-width="1"/>
<polyline points="257,819.5 311.5,819.5 311.5,916" fill="none" stroke="#1a1ab8" stroke-width="1" shape-rendering="crispEdges"/>
<rect x="220.0" y="843.0" width="79" height="15" fill="#fff" stroke="#1a1ab8" stroke-width="2" />
<text x="222.5" y="854.5" font-size="10.5" fill="#000" class="k" >Kontinuierlich</text>
<path d="M290 848h7l-3.5 4z" fill="#1a1ab8"/>
<polyline points="300,850.5 305.5,850.5 305.5,916" fill="none" stroke="#1a1ab8" stroke-width="1" shape-rendering="crispEdges"/>
<text x="220.5" y="870" font-size="10.5" fill="#000" class="k" >rate 2</text>
<rect x="221.0" y="874.0" width="36" height="36" fill="#fff0b8" stroke="#ee7c14" stroke-width="2" />
<rect x="223.5" y="876.5" width="31" height="31" fill="#b2b2b2" stroke="#c88a52" stroke-width="1" />
<rect x="224" y="877" width="30" height="2" fill="#c8c8c8" />
<rect x="232.5" y="902.5" width="13" height="7" fill="#fff" stroke="#ee7c14" stroke-width="1" />
<text x="239.0" y="908.5" font-size="7" fill="#ee7c14" text-anchor="middle" font-family="'Liberation Sans',sans-serif" textLength="11" lengthAdjust="spacingAndGlyphs" >DBL</text>
<ellipse cx="230" cy="892" rx="4" ry="8.5" fill="#dcdcdc" stroke="#9a9a9a" stroke-width="0.8"/>
<path d="M227 892h6" stroke="#a0a0a0" stroke-width="0.8"/>
<rect x="235" y="887" width="17" height="9" fill="#fff" />
<text x="235.5" y="895" font-size="9.6" fill="#000" class="k" font-family="'Liberation Sans',sans-serif" textLength="15.5" lengthAdjust="spacingAndGlyphs" >1.23</text>
<path d="M252.5 887.5l4.5 4.5l-4.5 4.5z" fill="#fff" stroke="#000" stroke-width="1"/>
<polyline points="258,892.5 300.5,892.5 300.5,916" fill="none" stroke="#f09030" stroke-width="1" shape-rendering="crispEdges"/>
<rect x="170.5" y="913.5" width="31" height="30" fill="#fff" stroke="#000" stroke-width="1" />
<rect x="171" y="914" width="30" height="8" fill="#8e1414" />
<text x="186" y="921" font-size="8" fill="#fff" text-anchor="middle" font-weight="bold" font-family="'Liberation Mono','DejaVu Sans Mono',monospace" textLength="27" lengthAdjust="spacingAndGlyphs" >DAQmx</text>
<path d="M177 925v8M173 929h8M174 926l6 6M180 926l-6 6" stroke="#d8c000" stroke-width="1"/>
<circle cx="177" cy="929" r="1.2" fill="#000"/>
<path d="M184 933.5h14M184 933.5l3-2.5v5zM198 933.5l-3-2.5v5z" stroke="#1020a0" stroke-width="1" fill="#1020a0"/>
<path d="M183 942v-4h3v4h3v-4h3v4h3v-4h3v4" fill="none" stroke="#1020a0" stroke-width="1"/>
<rect x="295.5" y="915.5" width="31" height="30" fill="#fff" stroke="#000" stroke-width="1" />
<rect x="296" y="916" width="30" height="8" fill="#8e1414" />
<text x="311" y="923" font-size="8" fill="#fff" text-anchor="middle" font-weight="bold" font-family="'Liberation Mono','DejaVu Sans Mono',monospace" textLength="27" lengthAdjust="spacingAndGlyphs" >DAQmx</text>
<circle cx="311" cy="935" r="8.5" fill="#2868c8" stroke="#103070" stroke-width="1"/>
<path d="M303 928l3 2M319 928l-3 2" stroke="#000" stroke-width="2.2"/>
<rect x="304.5" y="932.5" width="13" height="6" fill="#e8e8e8" stroke="#000" stroke-width="1" />
<path d="M306 935.5h10" stroke="#000" stroke-width="1.5" stroke-dasharray="2 1"/>
<rect x="349.5" y="914.5" width="31" height="30" fill="#fff" stroke="#000" stroke-width="1" />
<rect x="350" y="915" width="30" height="8" fill="#8e1414" />
<text x="365" y="922" font-size="8" fill="#fff" text-anchor="middle" font-weight="bold" font-family="'Liberation Mono','DejaVu Sans Mono',monospace" textLength="27" lengthAdjust="spacingAndGlyphs" >DAQmx</text>
<path d="M352 925l9 5l-9 5z" fill="#10c030"/>
<path d="M364 932.5h-1.5v4.5h-2h2v4.5h1.5" fill="none" stroke="#000" stroke-width="1"/>
<path d="M366 933.5q1.5-3 3 0t3 0t3 0t2 0" fill="none" stroke="#109030" stroke-width="0.9"/><path d="M366 938h1.5v-2.5h2v2.5h1.5v-2.5h2v2.5h1.5v-2.5h2" fill="none" stroke="#101890" stroke-width="1"/><path d="M366 942l1.4-2l1.4 2l1.4-2l1.4 2l1.4-2l1.4 2l1.4-2" fill="none" stroke="#e02020" stroke-width="0.8"/>
<rect x="142.5" y="949.5" width="90" height="15" fill="#fff" stroke="#8a1f8a" stroke-width="1" />
<rect x="140.5" y="946.5" width="90" height="15" fill="#fff" stroke="#8a1f8a" stroke-width="1" />
<rect x="141.5" y="947.5" width="88" height="13" fill="none" stroke="#e6cfe6" stroke-width="1" />
<text x="142.5" y="958" font-size="10.5" fill="#000" class="k" >AO - Spannung</text>
<path d="M221 952h7l-3.5 4z" fill="#8a1f8a"/>
<rect x="274.5" y="951.5" width="76" height="15" fill="#fff" stroke="#8a1f8a" stroke-width="1" />
<rect x="272.5" y="948.5" width="76" height="15" fill="#fff" stroke="#8a1f8a" stroke-width="1" />
<rect x="273.5" y="949.5" width="74" height="13" fill="none" stroke="#e6cfe6" stroke-width="1" />
<text x="274.5" y="960" font-size="10.5" fill="#000" class="k" >Sample-Takt</text>
<path d="M339 954h7l-3.5 4z" fill="#8a1f8a"/>
<rect x="473.5" y="798.5" width="8" height="8" fill="#902090" stroke="#000" stroke-width="1" />
<rect x="473.5" y="823.5" width="8" height="8" fill="#8c8c1c" stroke="#000" stroke-width="1" />
<rect x="1098.5" y="798.5" width="8" height="8" fill="#902090" stroke="#000" stroke-width="1" />
<rect x="1098.5" y="823.5" width="8" height="8" fill="#8c8c1c" stroke="#000" stroke-width="1" />
<polyline points="591,867.5 887.5,867.5 887.5,821.5 840,821.5" fill="none" stroke="#3030a0" stroke-width="1" shape-rendering="crispEdges"/>
<rect x="808.5" y="799.5" width="31" height="30" fill="#fff" stroke="#000" stroke-width="1" />
<rect x="809" y="800" width="30" height="8" fill="#8e1414" />
<text x="824" y="807" font-size="8" fill="#fff" text-anchor="middle" font-weight="bold" font-family="'Liberation Mono','DejaVu Sans Mono',monospace" textLength="27" lengthAdjust="spacingAndGlyphs" >DAQmx</text>
<path d="M821 819l8-8l3 3l-8 8z" fill="#f0c830" stroke="#000" stroke-width="0.9"/>
<path d="M821 819l-1.5 4.5l4.5-1.5z" fill="#f8e0b0" stroke="#000" stroke-width="0.8"/>
<path d="M829 811l2-2l3 3l-2 2z" fill="#e86060" stroke="#000" stroke-width="0.8"/>
<path d="M811 827h5v-6h6v6h5v-6h6v6h4" fill="none" stroke="#000" stroke-width="1.1"/><path d="M811 822q4-3 8 1.5t8 1.5t8-3t3-1" fill="none" stroke="#e01818" stroke-width="1.6"/>
<rect x="776.5" y="835.5" width="98" height="28" fill="#fff" stroke="#8a1f8a" stroke-width="1" />
<rect x="774.5" y="832.5" width="98" height="28" fill="#fff" stroke="#8a1f8a" stroke-width="1" />
<rect x="775.5" y="833.5" width="96" height="26" fill="none" stroke="#e6cfe6" stroke-width="1" />
<text x="817.0" y="844" font-size="10.5" fill="#000" class="k" text-anchor="middle" >Analog Sig</text>
<text x="817.0" y="856.5" font-size="10.5" fill="#000" class="k" text-anchor="middle" >1Kanal NSamples</text>
<path d="M863 844.5h7l-3.5 4z" fill="#8a1f8a"/>
<rect x="1107.5" y="799.5" width="31" height="30" fill="#fff" stroke="#000" stroke-width="1" />
<rect x="1108" y="800" width="30" height="8" fill="#8e1414" />
<text x="1123" y="807" font-size="8" fill="#fff" text-anchor="middle" font-weight="bold" font-family="'Liberation Mono','DejaVu Sans Mono',monospace" textLength="27" lengthAdjust="spacingAndGlyphs" >DAQmx</text>
<path d="M1123.5 816.5l4-4l4 4l-4 4z" fill="#e02020" stroke="#701010" stroke-width="0.7"/>
<path d="M1127.5 812.5l4-4l4 4l-4 4z" fill="#f4e040" stroke="#806010" stroke-width="0.7"/>
<path d="M1114 817.5h-1.5v4.5h-2h2v4.5h1.5" fill="none" stroke="#000" stroke-width="1"/>
<path d="M1115 819.5q1.5-3 3 0t3 0t3 0t2 0" fill="none" stroke="#109030" stroke-width="0.9"/><path d="M1115 824h1.5v-2.5h2v2.5h1.5v-2.5h2v2.5h1.5v-2.5h2" fill="none" stroke="#101890" stroke-width="1"/><path d="M1115 828l1.4-2l1.4 2l1.4-2l1.4 2l1.4-2l1.4 2l1.4-2" fill="none" stroke="#e02020" stroke-width="0.8"/>
<rect x="1148.5" y="799.5" width="31" height="31" fill="#fff" stroke="#000" stroke-width="1" />
<path d="M1152 804q12-6 24 0q4 8-2 16q-6 3-12 3l-6 5l1-5q-6-2-5-10q-1-5 0-9z" fill="#fff" stroke="#000" stroke-width="1"/>
<text x="1164" y="812" font-size="8" fill="#000" text-anchor="middle" font-weight="bold" font-family="'Liberation Mono','DejaVu Sans Mono',monospace" textLength="23" lengthAdjust="spacingAndGlyphs" >Error</text>
<text x="1164" y="822" font-size="10" fill="#000" text-anchor="middle" font-weight="bold" font-family="'Liberation Sans',sans-serif" >?!</text>
<rect x="484.0" y="881.0" width="14" height="14" fill="#ffffe4" stroke="#1010c8" stroke-width="2" />
<text x="491" y="893" font-size="12" fill="#1010c8" text-anchor="middle" font-weight="bold" font-family="'Liberation Sans',sans-serif" >i</text>
<text x="556" y="845" font-size="10.5" fill="#000" class="k" >written samples per channel</text>
<rect x="554.0" y="850.0" width="36" height="36" fill="#fff" stroke="#3030a0" stroke-width="2" />
<rect x="556.5" y="852.5" width="31" height="31" fill="#b2b2b2" stroke="#6464d4" stroke-width="1" />
<rect x="557" y="853" width="30" height="2" fill="#c8c8c8" />
<rect x="565.5" y="878.5" width="13" height="7" fill="#fff" stroke="#3030a0" stroke-width="1" />
<text x="572.0" y="884.5" font-size="7" fill="#3030a0" text-anchor="middle" font-family="'Liberation Sans',sans-serif" textLength="11" lengthAdjust="spacingAndGlyphs" >U32</text>
<path d="M555.5 863.5l4 5l-4 5z" fill="#fff" stroke="#000" stroke-width="1"/>
<rect x="563" y="862" width="18" height="12" fill="#fff" />
<text x="563.5" y="871" font-size="9.6" fill="#000" class="k" font-family="'Liberation Sans',sans-serif" textLength="15.5" lengthAdjust="spacingAndGlyphs" >1.23</text>
<text x="924.5" y="853" font-size="10.5" fill="#000" class="k" >Stopp 2</text>
<rect x="925.0" y="858.0" width="36" height="36" fill="#fff" stroke="#208830" stroke-width="2" />
<rect x="927.5" y="860.5" width="31" height="31" fill="#b2b2b2" stroke="#208830" stroke-width="1" />
<rect x="930.5" y="869.5" width="25" height="13" fill="#f2f2f2" stroke="#b8b8b8" stroke-width="1" />
<text x="943.5" y="879.5" font-size="7" fill="#e01030" text-anchor="middle" font-weight="bold" font-family="'Liberation Sans',sans-serif" >STOP</text>
<rect x="936.5" y="886.5" width="13" height="6" fill="#fff" stroke="#208830" stroke-width="1" />
<text x="943.0" y="892.5" font-size="7" fill="#208830" text-anchor="middle" font-weight="bold" font-family="'Liberation Sans',sans-serif" >TF</text>
<path d="M957.5 871.5l4 5l-4 5z" fill="#fff" stroke="#000" stroke-width="1"/>
<path d="M962 876.5h8" stroke="#208830" stroke-width="1" stroke-dasharray="1 1"/>
<rect x="970.5" y="871.5" width="15" height="15" fill="#dcf2dc" stroke="#208830" stroke-width="1" />
<circle cx="978" cy="879" r="5.6" fill="#fff" stroke="#401010" stroke-width="0.9"/><circle cx="978" cy="879" r="4" fill="#f01010"/>
<g filter="url(#wmblur)" opacity="0.8"><g transform="translate(2,520.5)" fill="#a8a8a8"><path d="M936 373Q944 368 953 367.5Q958 368 961 370.5L984 394.5V397L968 405.5Q958 392 951 384Q944 376 936 374.5z"/><path d="M969.5 371.5Q980 367.5 994.5 367.5L986 392L981.5 387.5L986.5 373.5Q979 374 974.5 377z"/><path d="M953.5 391L963.5 402V408L949 421.5Q948 405 953.5 391z"/></g></g><g opacity="0.62"><g transform="translate(0,518)" fill="#ffffff"><path d="M936 373Q944 368 953 367.5Q958 368 961 370.5L984 394.5V397L968 405.5Q958 392 951 384Q944 376 936 374.5z"/><path d="M969.5 371.5Q980 367.5 994.5 367.5L986 392L981.5 387.5L986.5 373.5Q979 374 974.5 377z"/><path d="M953.5 391L963.5 402V408L949 421.5Q948 405 953.5 391z"/></g></g>
<g filter="url(#wmblur)" opacity="0.8"><text x="996" y="908.0" font-size="26" fill="#a8a8a8" font-weight="bold" font-family="'Liberation Sans',sans-serif" textLength="127" lengthAdjust="spacingAndGlyphs" stroke="#a8a8a8" stroke-width="1.1" stroke-linejoin="round">NATIONAL</text></g><g opacity="0.62"><text x="994" y="905.5" font-size="26" fill="#ffffff" font-weight="bold" font-family="'Liberation Sans',sans-serif" textLength="127" lengthAdjust="spacingAndGlyphs" stroke="#ffffff" stroke-width="1.1" stroke-linejoin="round">NATIONAL</text></g>
<g filter="url(#wmblur)" opacity="0.8"><text x="988" y="930.5" font-size="26" fill="#a8a8a8" font-weight="bold" font-family="'Liberation Sans',sans-serif" textLength="175" lengthAdjust="spacingAndGlyphs" stroke="#a8a8a8" stroke-width="1.1" stroke-linejoin="round">INSTRUMENTS</text><text x="1165" y="918.5" font-size="8" fill="#a8a8a8" font-weight="bold" font-family="'Liberation Sans',sans-serif" >™</text></g><g opacity="0.62"><text x="986" y="928" font-size="26" fill="#ffffff" font-weight="bold" font-family="'Liberation Sans',sans-serif" textLength="175" lengthAdjust="spacingAndGlyphs" stroke="#ffffff" stroke-width="1.1" stroke-linejoin="round">INSTRUMENTS</text><text x="1163" y="916" font-size="8" fill="#ffffff" font-weight="bold" font-family="'Liberation Sans',sans-serif" >™</text></g>
<g filter="url(#wmblur)" opacity="0.8"><text x="964" y="961.0" font-size="26" fill="#a8a8a8" font-weight="bold" font-family="'Liberation Sans',sans-serif" textLength="88" lengthAdjust="spacingAndGlyphs" stroke="#a8a8a8" stroke-width="1.1" stroke-linejoin="round">LabVIEW</text><text x="1064" y="961.0" font-size="26" fill="#a8a8a8" font-weight="bold" font-family="'Liberation Sans',sans-serif" textLength="188" lengthAdjust="spacingAndGlyphs" stroke="#a8a8a8" stroke-width="1.1" stroke-linejoin="round">Studentenversion</text><text x="1053" y="951.5" font-size="10" fill="#a8a8a8" font-weight="bold" font-family="'Liberation Sans',sans-serif" >™</text></g><g opacity="0.62"><text x="962" y="958.5" font-size="26" fill="#ffffff" font-weight="bold" font-family="'Liberation Sans',sans-serif" textLength="88" lengthAdjust="spacingAndGlyphs" stroke="#ffffff" stroke-width="1.1" stroke-linejoin="round">LabVIEW</text><text x="1062" y="958.5" font-size="26" fill="#ffffff" font-weight="bold" font-family="'Liberation Sans',sans-serif" textLength="188" lengthAdjust="spacingAndGlyphs" stroke="#ffffff" stroke-width="1.1" stroke-linejoin="round">Studentenversion</text><text x="1051" y="949" font-size="10" fill="#ffffff" font-weight="bold" font-family="'Liberation Sans',sans-serif" >™</text></g>
</svg>
</section>
<footer id="taskbar">
<svg style="position:absolute;left:0;top:994px" width="1280" height="30" viewBox="0 994 1280 30" font-family="'DejaVu Sans Condensed','Liberation Sans',sans-serif" font-size="10.5" text-rendering="geometricPrecision"><defs></defs>
<rect x="0" y="994" width="1280" height="30" fill="url(#taskbar)" />
<path d="M0 994h86q12 4 12 15t-6 15h-92z" fill="url(#startg)"/>
<path d="M86 994q12 4 12 15t-6 15" fill="none" stroke="#1c5a20" stroke-width="1.5" opacity="0.6"/>
<path d="M12 1002q3-2 7 0l-1.5 6q-3.5-2-7 0z" fill="#e8502a"/>
<path d="M20 1002.5q3 2 7 0l-1.5 6q-3.5 2-7 0z" fill="#7ec040"/>
<path d="M10 1009.5q3-2 7 0l-1.5 6q-3.5-2-7 0z" fill="#4a8cf0"/>
<path d="M18 1010q3 2 7 0l-1.5 6q-3.5 2-7 0z" fill="#f8c830"/>
<text x="35" y="1015.5" font-size="17.5" fill="#fff" font-weight="bold" font-style="italic" font-family="'Liberation Sans',sans-serif" style="text-shadow:1px 1px 1px #1c4a1c">Start</text>
<rect x="112" y="1002" width="12" height="14" rx="2" fill="#f4f8ff" stroke="#5878c0"/><path d="M115 1012a3 3 0 1 1 5-3h-5" fill="none" stroke="#3060c0" stroke-width="1.5"/><path d="M120 1005l4-2" stroke="#e03030" stroke-width="1.5"/>
<circle cx="141" cy="1009" r="5.5" fill="none" stroke="#9098d0" stroke-width="4" stroke-dasharray="3 1.3"/><circle cx="141" cy="1009" r="4.5" fill="none" stroke="#7078b8" stroke-width="2.5"/>
<ellipse cx="165" cy="1006" rx="6" ry="3.5" fill="#e0e0e8" stroke="#707078"/><rect x="163" y="1009" width="4" height="4" fill="#c0c0c8"/><path d="M158 1014h14" stroke="#e8e8f0" stroke-width="2.5"/><rect x="163" y="1012.5" width="4" height="3" fill="#e8b020"/>
<rect x="184" y="1002" width="11" height="14" fill="#202020" /><rect x="185" y="1002.5" width="1" height="1.5" fill="#d0d0d0" /><rect x="185" y="1014" width="1" height="1.5" fill="#d0d0d0" /><rect x="187" y="1002.5" width="1" height="1.5" fill="#d0d0d0" /><rect x="187" y="1014" width="1" height="1.5" fill="#d0d0d0" /><rect x="189" y="1002.5" width="1" height="1.5" fill="#d0d0d0" /><rect x="189" y="1014" width="1" height="1.5" fill="#d0d0d0" /><rect x="191" y="1002.5" width="1" height="1.5" fill="#d0d0d0" /><rect x="191" y="1014" width="1" height="1.5" fill="#d0d0d0" /><rect x="193" y="1002.5" width="1" height="1.5" fill="#d0d0d0" /><rect x="193" y="1014" width="1" height="1.5" fill="#d0d0d0" /><rect x="185" y="1005" width="9" height="8" fill="#104010" /><path d="M185 1004.5l8 4.5l-8 4.5z" fill="#f8d820" stroke="#c09000" stroke-width="0.6"/><path d="M187 1009h3M188.5 1007.5v3" stroke="#000" stroke-width="0.9"/><path d="M181 1007.5h4" stroke="#e02020" stroke-width="1.2"/><path d="M181 1011.5h4" stroke="#2020e0" stroke-width="1.2"/><path d="M193 1009h4" stroke="#e02020" stroke-width="1.2"/>
<rect x="203.5" y="1001.5" width="15" height="15" fill="#a8a820" stroke="#d8d860"/><circle cx="211" cy="1009" r="4.5" fill="none" stroke="#fff" stroke-width="1.8"/><path d="M211 1006.5v3h2.5" stroke="#fff" stroke-width="1.5" fill="none"/>
<circle cx="234" cy="1009" r="7.5" fill="#3858b0"/><path d="M227 1007a8 8 0 1 0 13 -3q1 4-1 7q-3 5-8 3q-4-2-3-6q-1-2 1-4q-3 0-3 3z" fill="#f08020"/><path d="M228 1005q2-3 5-3q-1 2 0 3q-3 1-3 4q-2-1-2-4z" fill="#f8c030"/>
<path d="M261 1010.5a4.5 4.5 0 1 0-1.3 3.2M253 1010h8" fill="none" stroke="#58b0f8" stroke-width="2.6"/><ellipse cx="257" cy="1009" rx="8" ry="3" fill="none" stroke="#f0c830" stroke-width="1" transform="rotate(-30 257 1009)"/>
<text x="296" y="1007" font-size="11" fill="#dfe8ff" font-family="'Liberation Sans',sans-serif" >»</text>
<rect x="311.5" y="997.5" width="159" height="25" rx="2.5" fill="url(#taskAct)" stroke="#17358c"/>
<rect x="325" y="1003" width="11" height="14" fill="#202020" /><rect x="326" y="1003.5" width="1" height="1.5" fill="#d0d0d0" /><rect x="326" y="1015" width="1" height="1.5" fill="#d0d0d0" /><rect x="328" y="1003.5" width="1" height="1.5" fill="#d0d0d0" /><rect x="328" y="1015" width="1" height="1.5" fill="#d0d0d0" /><rect x="330" y="1003.5" width="1" height="1.5" fill="#d0d0d0" /><rect x="330" y="1015" width="1" height="1.5" fill="#d0d0d0" /><rect x="332" y="1003.5" width="1" height="1.5" fill="#d0d0d0" /><rect x="332" y="1015" width="1" height="1.5" fill="#d0d0d0" /><rect x="334" y="1003.5" width="1" height="1.5" fill="#d0d0d0" /><rect x="334" y="1015" width="1" height="1.5" fill="#d0d0d0" /><rect x="326" y="1006" width="9" height="8" fill="#104010" /><path d="M326 1005.5l8 4.5l-8 4.5z" fill="#f8d820" stroke="#c09000" stroke-width="0.6"/><path d="M328 1010h3M329.5 1008.5v3" stroke="#000" stroke-width="0.9"/><path d="M322 1008.5h4" stroke="#e02020" stroke-width="1.2"/><path d="M322 1012.5h4" stroke="#2020e0" stroke-width="1.2"/><path d="M334 1010h4" stroke="#e02020" stroke-width="1.2"/>
<text x="342" y="1012.5" font-size="11" fill="#fff" font-weight="bold" >5</text>
<text x="351" y="1012.5" font-size="11" fill="#fff" >LabVIEW 8.6 Dev…</text>
<path d="M461.5 1008.5h6l-3.0 3z" fill="#fff"/>
<rect x="472.5" y="997.5" width="157" height="24" rx="2.5" fill="url(#taskBtn)" stroke="#2a5cc8"/>
<circle cx="489" cy="1009" r="7.5" fill="#3858b0"/><path d="M482 1007a8 8 0 1 0 13 -3q1 4-1 7q-3 5-8 3q-4-2-3-6q-1-2 1-4q-3 0-3 3z" fill="#f08020"/><path d="M483 1005q2-3 5-3q-1 2 0 3q-3 1-3 4q-2-1-2-4z" fill="#f8c030"/>
<text x="500" y="1012.5" font-size="11" fill="#fff" font-weight="bold" >4</text>
<text x="510" y="1012.5" font-size="11" fill="#fff" >Firefox</text>
<path d="M621.5 1008.5h6l-3.0 3z" fill="#fff"/>
<rect x="632.5" y="997.5" width="157" height="24" rx="2.5" fill="url(#taskBtn)" stroke="#2a5cc8"/>
<path d="M641 1004h5l1.5 1.5h8v10h-14.5z" fill="#f8e080" stroke="#a08020" stroke-width="1"/><path d="M641 1015.5l2.5-7h13.5l-1.5 7z" fill="#fcf0a8" stroke="#a08020" stroke-width="0.8"/>
<text x="660" y="1012.5" font-size="11" fill="#fff" >lauffaehig</text>
<rect x="1188" y="994" width="92" height="30" fill="url(#tray)" />
<rect x="1187" y="994" width="1" height="30" fill="#0a3c98" />
<circle cx="1187.5" cy="1009.5" r="8.5" fill="#2a7cf0" stroke="#b8d4ff" stroke-width="1"/>
<path d="M1189.5 1005.5l-4 4l4 4" fill="none" stroke="#fff" stroke-width="2"/>
<rect x="1199.5" y="1002.5" width="9" height="7" fill="#a8c8f0" stroke="#e8e8f0"/><rect x="1194.5" y="1006.5" width="9" height="7" fill="#7898d0" stroke="#d8d8e8"/><path d="M1197 1015h5M1202 1011h5" stroke="#d0d0d8" stroke-width="1.5"/>
<path d="M1217 1002l12 10M1229 1002l-10 9" stroke="#183878" stroke-width="2.5"/><path d="M1216 1012h15" stroke="#000" stroke-width="1.6"/><path d="M1220 1015h8" stroke="#000" stroke-width="1.2"/><path d="M1218 1001l5 3l5-3" fill="none" stroke="#d0e0ff" stroke-width="1.2"/>
<text x="1239" y="1012.5" font-size="11" fill="#fff" >10:34</text>
</svg>
</footer>
</div></body></html>
